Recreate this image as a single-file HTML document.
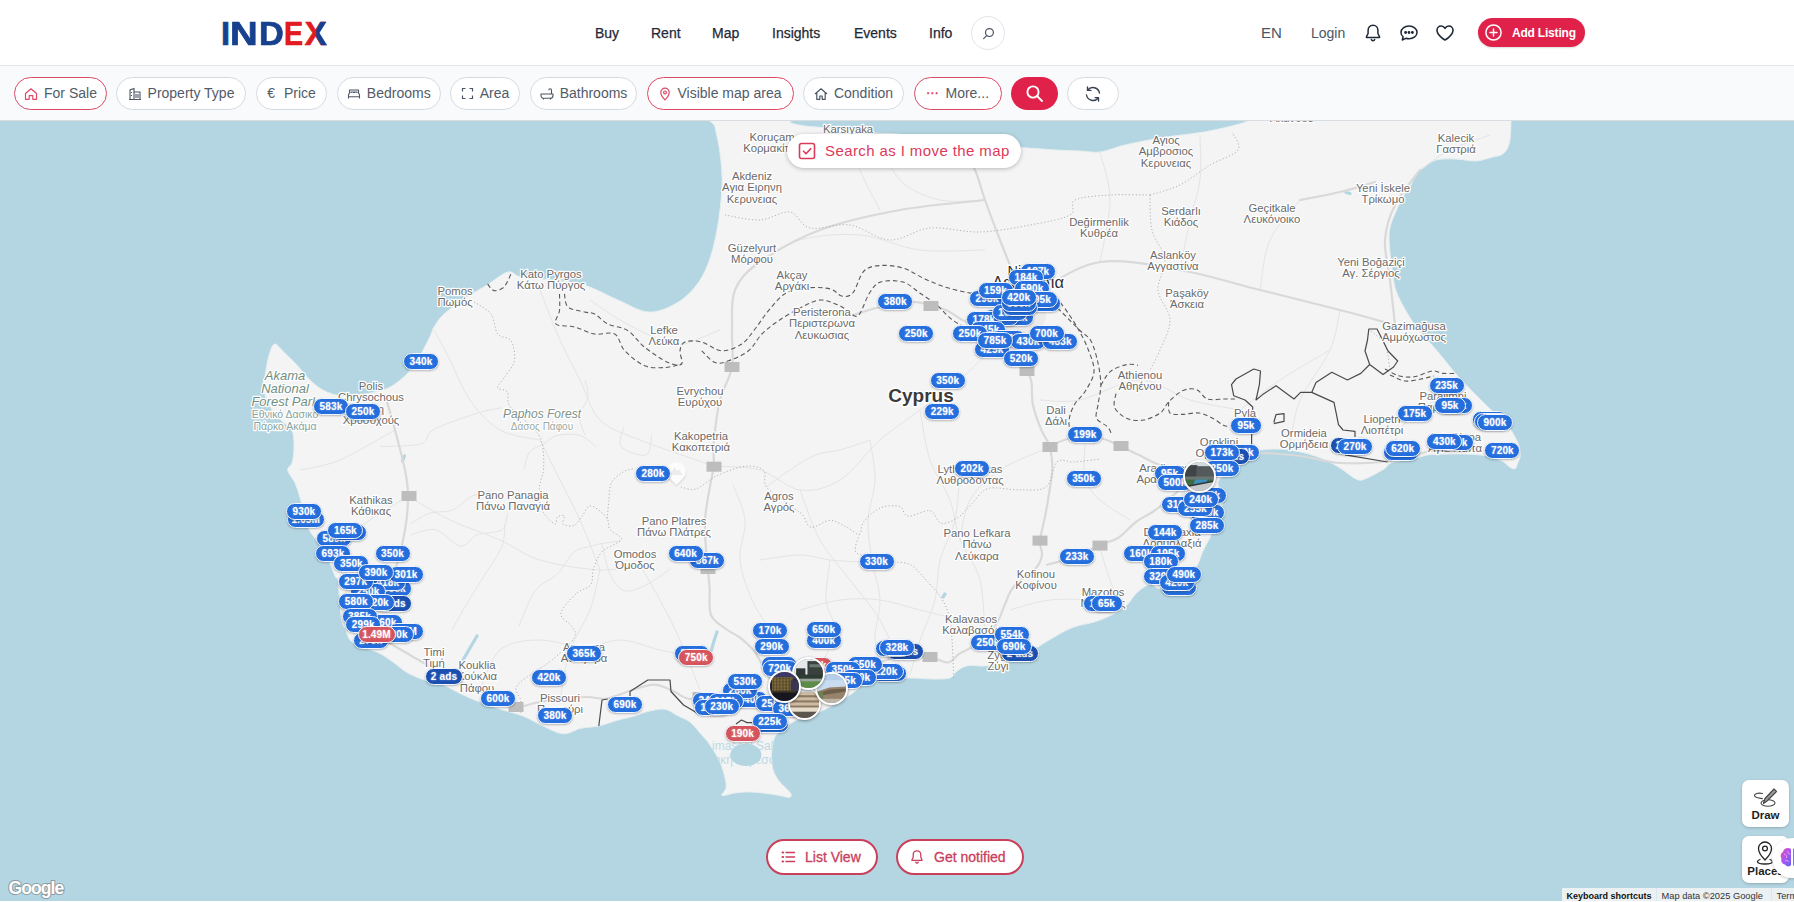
<!DOCTYPE html>
<html lang="en">
<head>
<meta charset="utf-8">
<title>INDEX - Map</title>
<style>
*{box-sizing:border-box;margin:0;padding:0}
html,body{width:1794px;height:902px;overflow:hidden;background:#fff;font-family:"Liberation Sans",sans-serif;color:#1f2937}
#hdr{position:absolute;left:0;top:0;width:1794px;height:66px;background:#fff;border-bottom:1px solid #e3e6ea}
#logo{position:absolute;left:0;top:0;font-size:32.56px;line-height:1;font-weight:bold;color:#17408f}
#logo span{position:absolute;top:17.7px;transform-origin:0 0;display:block;-webkit-text-stroke:0.7px currentColor}
#logo .r{color:#e21b23}
#logo .x{color:#e21b23}
#logo .x::after{content:"X";position:absolute;left:0;top:0;color:#17408f;clip-path:inset(-5px -5px -5px 11.6px)}
.nav{position:absolute;top:24px;font-size:14px;line-height:18px;color:#1f2937;white-space:nowrap;-webkit-text-stroke:0.25px #1f2937}
.nav.lt{color:#4b5563;-webkit-text-stroke:0}
.circ{position:absolute;left:971px;top:16px;width:34px;height:34px;border:1px solid #e2e5e9;border-radius:50%;background:#fff}
.ico{position:absolute}
#add{position:absolute;left:1478px;top:18px;width:107px;height:29px;border-radius:15px;background:#e0224a;color:#fff;font-size:12px;font-weight:bold;line-height:30px;padding-left:34px;letter-spacing:-0.2px;white-space:nowrap;box-shadow:0 1px 2px rgba(0,0,0,.15)}
#fbar{position:absolute;left:0;top:66px;width:1794px;height:55px;background:#f8fafc;border-bottom:1px solid #d9dde1}
.pill{position:absolute;top:10.5px;height:33px;border:1px solid #d6dae0;border-radius:17px;background:#fff;color:#525b69;font-size:14px;line-height:31px;white-space:nowrap;display:flex;align-items:center;justify-content:center;gap:6px;padding-top:1px}
.pill.on{border:1.3px solid #dd4a66}
.pill svg{flex:none}
#sbtn{position:absolute;left:1010.5px;top:10.5px;width:47px;height:33px;border-radius:17px;background:#e0224a}
#map{position:absolute;left:0;top:121px;width:1794px;height:780px;overflow:hidden;background:#b4d6e2}
.mapsvg{position:absolute;left:0;top:0}
.mk{position:absolute;height:17px;border:1px solid #f1f6ff;border-radius:9px;background:#246ddd;color:#fff;font-size:10px;font-weight:bold;line-height:15px;text-align:center;white-space:nowrap;letter-spacing:.15px;box-shadow:0 1px 2px rgba(0,0,0,.25);text-shadow:0 0 2px rgba(255,255,255,.5)}
.mk.rd{background:#d5545c}
.mk.dk{background:#1a4fb0}
.ph{position:absolute;width:33px;height:33px;border-radius:50%;border:2px solid #fff;box-shadow:0 1px 3px rgba(0,0,0,.4);overflow:hidden;background:#888}
.ph svg{display:block;filter:blur(.7px);margin:-1px 0 0 -1px}
#sam{position:absolute;left:787px;top:13px;width:234px;height:34px;border-radius:17px;background:#fff;box-shadow:0 1px 4px rgba(0,0,0,.25);color:#dc3a5a;font-size:15px;line-height:34px;padding-left:38px;white-space:nowrap;letter-spacing:.4px}
.bbtn{position:absolute;top:718px;height:36px;border:2px solid #c9405c;border-radius:18px;background:#fff;color:#c9405c;font-size:14px;line-height:32px;white-space:nowrap;-webkit-text-stroke:0.3px #c9405c}
.tool{position:absolute;left:1742px;width:47px;height:47px;border-radius:7px;background:#fff;box-shadow:0 1px 3px rgba(0,0,0,.2);font-size:11.5px;font-weight:bold;color:#1f1f1f;text-align:center}
.tool span{position:absolute;left:0;right:0;bottom:5px;line-height:13px}
#goog{position:absolute;left:0;top:750px}
#attr{position:absolute;left:1561.5px;top:767px;height:14px;width:240px;background:rgba(245,245,245,.85);font-size:9.3px;line-height:16px;color:#333;white-space:nowrap}
#attr b{position:absolute;left:5px;top:0;font-size:9px;color:#111}
#attr i{font-style:normal;position:absolute;top:0;height:14px;padding-left:5px;border-left:1.5px solid #dbe7ec}
#brain{position:absolute;left:1772px;top:717px;width:40px;height:40px;border-radius:50%;background:#fff;box-shadow:0 1px 3px rgba(0,0,0,.2)}
#foot{position:absolute;left:0;top:901px;width:1794px;height:1px;background:#fff}
</style>
</head>
<body>
<div id="hdr">
  <div id="logo"><span class="" style="left:221.02px;transform:scaleX(1)">I</span><span class="" style="left:230.43px;transform:scaleX(1.178)">N</span><span class="" style="left:258.70px;transform:scaleX(1.054)">D</span><span class="r" style="left:284.08px;transform:scaleX(0.878)">E</span><span class="x" style="left:304.71px;transform:scaleX(1.0)">X</span></div>
  <div class="nav" style="left:595px">Buy</div>
  <div class="nav" style="left:651px">Rent</div>
  <div class="nav" style="left:712px">Map</div>
  <div class="nav" style="left:772px">Insights</div>
  <div class="nav" style="left:854px">Events</div>
  <div class="nav" style="left:929px">Info</div>
  <div class="circ"><svg class="ico" style="left:9px;top:9px" width="15" height="15" viewBox="0 0 16 16" fill="none" stroke="#4b5563" stroke-width="1.3" stroke-linecap="round"><circle cx="9" cy="7" r="4.2"/><path d="M6 10.2 2.8 13.4"/></svg></div>
  <div class="nav lt" style="left:1261px;font-size:15px;-webkit-text-stroke:0">EN</div>
  <div class="nav lt" style="left:1311px">Login</div>
  <svg class="ico" style="left:1364px;top:23px" width="18" height="20" viewBox="0 0 18 20" fill="none" stroke="#1f2937" stroke-width="1.5" stroke-linecap="round" stroke-linejoin="round"><path d="M9 2.2c-3 0-4.9 2.2-4.9 5v3.3L2.5 13.6v.9h13v-.9l-1.6-3.1V7.2c0-2.800-1.900-5-4.900-5z"/><path d="M7.300 16.600a1.800 1.800 0 0 0 3.400 0"/></svg>
  <svg class="ico" style="left:1399px;top:24px" width="20" height="18" viewBox="0 0 20 18" fill="none" stroke="#1f2937" stroke-width="1.5" stroke-linecap="round" stroke-linejoin="round"><path d="M10 2C5.600 2 2 4.800 2 8.400c0 1.700.8 3.200 2.100 4.300L3.300 16l3.500-1.700c1 .3 2.100.5 3.200.5 4.400 0 8-2.800 8-6.400S14.400 2 10 2z"/><circle cx="6.600" cy="8.500" r=".7" fill="#1f2937"/><circle cx="10" cy="8.500" r=".7" fill="#1f2937"/><circle cx="13.400" cy="8.500" r=".7" fill="#1f2937"/></svg>
  <svg class="ico" style="left:1435px;top:24px" width="20" height="18" viewBox="0 0 20 18" fill="none" stroke="#1f2937" stroke-width="1.6" stroke-linejoin="round"><path d="M10 16S2 11.500 2 6.300C2 3.900 3.800 2 6.100 2 7.700 2 9.200 2.900 10 4.300 10.800 2.900 12.300 2 13.900 2 16.200 2 18 3.900 18 6.300 18 11.500 10 16 10 16z"/></svg>
  <div id="add"><svg class="ico" style="left:6px;top:5px" width="19" height="19" viewBox="0 0 19 19" fill="none" stroke="#fff" stroke-width="1.5" stroke-linecap="round"><circle cx="9.500" cy="9.500" r="7.600"/><path d="M9.500 6v7M6 9.500h7"/></svg>Add Listing</div>
</div>
<div id="fbar">
  <div class="pill on" style="left:14px;width:93px"><svg width="14" height="14" viewBox="0 0 14 14" fill="none" stroke="#dd4a66" stroke-width="1.2" stroke-linejoin="round"><path d="M1.500 6.500 7 1.800l5.500 4.700V12.300H8.800V8.600H5.200v3.700H1.500z"/></svg>For Sale</div>
  <div class="pill" style="left:116px;width:130px"><svg width="14" height="14" viewBox="0 0 14 14" fill="none" stroke="#4b5563" stroke-width="1.100"><path d="M2 12.500V3l4-1.500v11M6 5h6v7.500M1 12.500h12M8 7v4M10 7v4M3.500 5v1M3.500 8v1"/></svg>Property Type</div>
  <div class="pill" style="left:256px;width:71px"><span style="font-size:14px;margin-right:3px;-webkit-text-stroke:0">€</span>Price</div>
  <div class="pill" style="left:337px;width:103.500px"><svg width="14" height="14" viewBox="0 0 14 14" fill="none" stroke="#4b5563" stroke-width="1.100" stroke-linejoin="round"><path d="M1.500 11.500V7.800L2.500 6V3h9v3l1 1.800v3.700M1.500 9.800h11M4 6V5h2.500v1M7.500 6V5H10v1"/></svg>Bedrooms</div>
  <div class="pill" style="left:450px;width:70px"><svg width="13" height="13" viewBox="0 0 13 13" fill="none" stroke="#4b5563" stroke-width="1.200"><path d="M1.500 4.500v-3h3M8.500 1.500h3v3M11.500 8.500v3h-3M4.500 11.500h-3v-3"/></svg>Area</div>
  <div class="pill" style="left:530px;width:107px"><svg width="14" height="14" viewBox="0 0 14 14" fill="none" stroke="#4b5563" stroke-width="1.100" stroke-linejoin="round"><path d="M1 7h12v1.500c0 1.700-1.200 2.800-2.800 2.800H3.800C2.200 11.300 1 10.200 1 8.500zM11.500 7V3.300c0-.9-.6-1.500-1.400-1.500S8.800 2.400 8.800 3.300M3.500 11.300v1.200M10.500 11.300v1.200"/></svg>Bathrooms</div>
  <div class="pill on" style="left:647px;width:147px"><svg width="12" height="14" viewBox="0 0 12 14" fill="none" stroke="#dd4a66" stroke-width="1.200"><path d="M6 12.800S1.800 8.600 1.800 5.400a4.200 4.200 0 0 1 8.400 0C10.200 8.600 6 12.800 6 12.800z"/><circle cx="6" cy="5.400" r="1.400"/></svg>Visible map area</div>
  <div class="pill" style="left:803px;width:101px"><svg width="14" height="14" viewBox="0 0 14 14" fill="none" stroke="#4b5563" stroke-width="1.200" stroke-linejoin="round"><path d="M1 7 7 1.800 13 7M2.800 5.800v6.500h3V9h2.400v3.300h3V5.800"/></svg>Condition</div>
  <div class="pill on" style="left:913.500px;width:88.500px"><span style="color:#dd4a66;letter-spacing:1px;font-size:12px;-webkit-text-stroke:0.6px #dd4a66;position:relative;top:-3px">...</span>More...</div>
  <div id="sbtn"><svg class="ico" style="left:14px;top:7px" width="19" height="19" viewBox="0 0 19 19" fill="none" stroke="#fff" stroke-width="1.900" stroke-linecap="round"><circle cx="8" cy="8" r="5.600"/><path d="M12.200 12.200 17 17"/></svg></div>
  <div class="pill" style="left:1067px;width:52px"><svg width="18" height="18" viewBox="0 0 18 18" fill="none" stroke="#374151" stroke-width="1.400" stroke-linecap="round" stroke-linejoin="round"><path d="M15.500 8A6.600 6.600 0 0 0 3.700 5.200M2.500 10a6.600 6.600 0 0 0 11.800 2.800M3.500 2v3.400h3.400M14.500 16v-3.400h-3.400"/></svg></div>
</div>
<div id="map">
<svg width="0" height="0" style="position:absolute"><defs><pattern id="win1" width="3" height="3" patternUnits="userSpaceOnUse"><rect width="3" height="3" fill="none"/><rect x="2" width="1" height="3" fill="#4a3f26"/><rect y="2" width="3" height="1" fill="#5a4c2c"/></pattern></defs></svg>
<svg class="mapsvg" width="1794" height="780" viewBox="0 121 1794 780">
<rect x="0" y="121" width="1794" height="780" fill="#b4d6e2"/>
<path d="M714.0 118.0C726.5 116.5 777.3 117.2 790.0 118.0C802.7 118.8 787.5 121.2 790.0 122.5C792.5 123.8 799.5 125.2 805.0 126.0C810.5 126.8 815.5 126.8 823.0 127.5C830.5 128.2 841.3 129.1 850.0 130.0C858.7 130.9 866.2 132.2 875.0 133.0C883.8 133.8 889.0 133.1 903.0 134.5C917.0 135.9 944.8 139.6 958.7 141.5C972.6 143.4 976.2 144.7 986.6 145.7C997.0 146.7 1009.4 146.9 1021.0 147.6C1032.6 148.3 1046.0 149.4 1056.0 150.0C1066.0 150.6 1073.7 150.7 1081.0 151.0C1088.3 151.3 1092.7 153.0 1100.0 152.0C1107.3 151.0 1114.5 147.4 1125.0 145.0C1135.5 142.6 1150.2 139.7 1162.7 137.6C1175.2 135.5 1189.5 134.3 1200.0 132.6C1210.5 130.9 1217.4 129.4 1225.4 127.5C1233.4 125.6 1243.9 122.9 1248.0 121.0C1252.1 119.1 1206.2 116.8 1250.0 116.0C1293.8 115.2 1467.5 115.2 1511.0 116.0C1554.5 116.8 1511.2 117.0 1511.0 121.0C1510.8 125.0 1510.8 135.2 1510.0 140.0C1509.2 144.8 1508.0 147.5 1506.5 150.0C1505.0 152.5 1503.3 153.8 1501.0 155.0C1498.7 156.2 1496.9 156.0 1492.7 157.0C1488.5 158.0 1482.1 160.7 1476.0 161.0C1469.9 161.3 1462.7 159.2 1456.0 159.0C1449.3 158.8 1441.4 158.6 1436.0 160.0C1430.6 161.4 1426.9 165.2 1423.5 167.7C1420.1 170.2 1417.7 172.1 1415.6 175.0C1413.5 177.9 1412.8 181.8 1411.0 185.0C1409.2 188.2 1407.3 189.2 1404.6 194.0C1401.9 198.8 1397.5 207.6 1395.0 213.6C1392.5 219.6 1390.4 224.5 1389.5 230.0C1388.6 235.5 1389.1 240.2 1389.5 246.7C1389.9 253.1 1390.9 261.4 1392.0 268.7C1393.1 276.0 1393.5 283.4 1396.0 290.7C1398.5 298.0 1403.3 306.3 1407.0 312.7C1410.7 319.1 1413.8 323.6 1418.0 329.0C1422.2 334.4 1427.8 340.2 1432.0 345.0C1436.2 349.8 1439.2 353.4 1443.0 358.0C1446.8 362.6 1449.8 366.8 1454.6 372.3C1459.4 377.8 1466.2 384.9 1472.0 391.0C1477.8 397.1 1483.8 402.9 1489.7 408.6C1495.6 414.3 1502.6 419.3 1507.3 425.0C1512.0 430.7 1515.6 437.7 1517.8 442.6C1520.0 447.5 1520.5 450.8 1520.5 454.3C1520.5 457.8 1518.4 461.2 1517.5 463.6C1516.6 466.0 1516.3 468.2 1515.0 468.8C1513.7 469.4 1511.7 468.2 1509.6 467.0C1507.5 465.8 1505.9 463.0 1502.6 461.3C1499.3 459.6 1494.8 457.8 1489.7 456.6C1484.6 455.4 1478.8 454.7 1472.0 454.3C1465.2 453.9 1456.2 453.9 1448.8 454.0C1441.4 454.1 1433.6 454.2 1427.7 455.0C1421.8 455.8 1419.5 457.8 1413.6 459.0C1407.6 460.2 1396.9 460.8 1392.0 462.5C1387.1 464.2 1388.5 466.2 1384.0 469.0C1379.5 471.8 1369.7 477.3 1365.0 479.0C1360.3 480.7 1360.4 481.0 1356.0 479.0C1351.6 477.0 1344.4 470.5 1338.5 467.0C1332.6 463.5 1327.5 460.6 1320.7 458.0C1314.0 455.4 1305.5 453.0 1298.0 451.5C1290.5 450.0 1283.4 449.0 1276.0 449.0C1268.6 449.0 1259.8 449.7 1253.8 451.5C1247.8 453.3 1244.5 456.7 1240.0 460.0C1235.5 463.3 1230.7 467.7 1227.0 471.5C1223.3 475.3 1218.7 478.6 1218.0 482.7C1217.3 486.8 1222.3 490.1 1222.6 496.0C1222.9 501.9 1221.0 513.7 1220.0 518.0C1219.0 522.3 1218.2 518.7 1216.5 522.0C1214.8 525.3 1212.0 533.1 1209.8 537.9C1207.5 542.7 1205.2 546.2 1203.0 551.0C1200.8 555.8 1199.4 562.1 1196.4 566.9C1193.4 571.7 1190.6 576.3 1185.0 580.0C1179.4 583.7 1168.9 588.2 1163.0 589.0C1157.1 589.8 1154.1 583.9 1149.6 584.7C1145.1 585.5 1139.7 590.2 1136.0 593.6C1132.3 597.0 1131.0 601.4 1127.3 604.8C1123.6 608.1 1119.2 610.9 1114.0 613.7C1108.8 616.5 1102.7 619.3 1096.0 621.5C1089.3 623.7 1080.5 624.6 1073.8 627.0C1067.1 629.4 1062.0 632.7 1056.0 636.0C1050.0 639.3 1043.2 643.7 1038.0 647.0C1032.8 650.3 1029.9 653.4 1024.7 656.0C1019.5 658.6 1013.7 661.1 1007.0 662.8C1000.3 664.5 991.1 665.5 984.6 666.0C978.1 666.5 972.4 664.8 967.8 665.7C963.1 666.6 959.7 669.2 956.7 671.3C953.7 673.3 954.1 676.7 950.0 678.0C945.9 679.3 938.7 679.0 932.0 679.0C925.3 679.0 917.3 677.8 909.9 678.0C902.5 678.2 895.1 679.1 887.6 680.2C880.1 681.3 871.0 682.5 865.0 684.7C859.0 686.9 857.1 690.3 851.9 693.6C846.7 696.9 840.0 701.4 834.0 704.7C828.0 708.0 822.3 711.0 816.0 713.6C809.7 716.2 801.9 717.3 796.0 720.3C790.1 723.3 784.0 728.7 780.5 731.5C777.0 734.3 776.2 733.9 774.8 737.0C773.3 740.1 772.3 745.8 771.8 750.0C771.3 754.2 771.5 758.3 771.8 762.0C772.1 765.7 772.5 768.7 773.8 772.0C775.1 775.3 777.8 779.3 779.8 782.0C781.8 784.7 783.9 786.0 785.8 788.0C787.7 790.0 790.4 792.4 791.0 794.0C791.6 795.6 791.0 797.2 789.5 797.5C788.0 797.8 785.3 796.6 782.0 796.0C778.7 795.4 775.1 794.6 769.8 793.9C764.4 793.2 755.7 792.0 749.9 791.9C744.1 791.8 739.6 792.4 735.0 793.0C730.4 793.6 723.5 796.3 722.0 795.5C720.5 794.7 725.5 790.9 726.0 788.0C726.5 785.1 726.0 782.3 725.0 778.0C724.0 773.7 722.5 767.5 720.0 762.0C717.5 756.5 713.3 749.8 710.0 745.0C706.7 740.2 703.3 736.8 700.0 733.0C696.7 729.2 693.7 724.9 690.0 722.0C686.3 719.1 682.2 718.0 678.0 715.9C673.8 713.8 669.6 709.9 664.6 709.2C659.6 708.5 652.8 710.4 647.8 711.5C642.8 712.6 639.6 714.5 634.4 716.0C629.2 717.5 622.5 718.8 616.6 720.5C610.7 722.2 604.8 724.7 598.8 726.0C592.8 727.3 586.9 727.0 580.9 728.3C574.9 729.6 569.7 734.4 563.0 733.8C556.3 733.2 547.5 727.9 540.8 724.9C534.1 721.9 529.7 718.6 523.0 716.0C516.3 713.4 508.1 711.7 500.7 709.3C493.3 706.9 485.1 704.1 478.4 701.5C471.7 698.9 466.4 696.5 460.5 693.7C454.6 690.9 448.6 687.0 442.7 684.8C436.8 682.6 430.8 682.3 424.9 680.3C418.9 678.2 412.2 675.5 407.0 672.5C401.8 669.5 398.4 665.8 393.6 662.5C388.8 659.2 384.9 655.9 378.0 652.5C371.1 649.1 358.0 647.0 352.4 642.4C346.8 637.8 346.7 631.3 344.6 624.6C342.5 617.9 341.1 609.4 340.0 602.0C338.9 594.6 338.7 584.2 337.9 580.0C337.1 575.8 336.7 579.7 335.4 577.0C334.1 574.3 332.3 568.3 330.3 563.6C328.3 558.9 326.1 552.8 323.6 548.6C321.1 544.4 317.8 542.0 315.3 538.6C312.8 535.2 310.6 533.0 308.6 528.5C306.7 524.0 305.0 516.8 303.6 511.8C302.2 506.8 301.6 503.1 300.2 498.4C298.8 493.7 297.3 488.1 295.2 483.4C293.1 478.7 288.2 473.4 287.7 470.0C287.2 466.6 290.9 466.8 292.0 463.0C293.1 459.2 294.0 452.5 294.0 447.0C294.0 441.5 293.8 434.2 292.0 430.0C290.2 425.8 286.3 425.3 283.0 422.0C279.7 418.7 275.0 414.5 272.0 410.0C269.0 405.5 266.5 399.3 265.0 395.0C263.5 390.7 263.0 387.2 263.0 384.0C263.0 380.8 264.3 379.3 265.0 376.0C265.7 372.7 266.2 368.0 267.0 364.0C267.8 360.0 268.7 355.3 270.0 352.0C271.3 348.7 272.5 343.8 275.0 344.0C277.5 344.2 281.6 349.9 285.2 353.4C288.8 356.9 293.0 360.9 296.9 365.1C300.8 369.3 304.7 374.6 308.6 378.5C312.5 382.4 316.1 385.9 320.3 388.5C324.5 391.1 329.2 393.1 333.7 394.4C338.1 395.6 341.8 396.1 347.0 396.0C352.2 395.9 358.3 395.2 365.0 394.0C371.7 392.8 380.7 391.4 387.2 388.5C393.7 385.6 399.2 381.0 403.9 376.8C408.6 372.6 412.2 368.1 415.6 363.4C419.0 358.7 421.5 353.1 424.0 348.4C426.5 343.7 429.0 338.6 430.7 335.0C432.4 331.4 431.8 330.5 434.0 327.0C436.2 323.5 438.5 319.0 444.0 314.0C449.5 309.0 459.8 301.8 467.0 297.0C474.2 292.2 480.2 289.2 487.0 285.0C493.8 280.8 502.3 273.3 508.0 272.0C513.7 270.7 513.8 275.7 521.0 277.0C528.2 278.3 540.5 278.7 551.0 280.0C561.5 281.3 572.8 281.7 584.0 285.0C595.2 288.3 607.3 295.5 618.0 300.0C628.7 304.5 638.5 311.3 648.0 312.0C657.5 312.7 667.2 308.2 675.0 304.0C682.8 299.8 689.5 293.7 695.0 287.0C700.5 280.3 704.3 273.5 708.0 264.0C711.7 254.5 714.7 242.8 717.0 230.0C719.3 217.2 721.5 199.8 722.0 187.0C722.5 174.2 721.2 163.0 720.0 153.0C718.8 143.0 716.0 132.8 715.0 127.0C714.0 121.2 701.5 119.5 714.0 118.0Z" fill="#f4f4f4" stroke="#e6eef0" stroke-width="1"/>
<defs><clipPath id="landclip"><path d="M714.0 118.0C726.5 116.5 777.3 117.2 790.0 118.0C802.7 118.8 787.5 121.2 790.0 122.5C792.5 123.8 799.5 125.2 805.0 126.0C810.5 126.8 815.5 126.8 823.0 127.5C830.5 128.2 841.3 129.1 850.0 130.0C858.7 130.9 866.2 132.2 875.0 133.0C883.8 133.8 889.0 133.1 903.0 134.5C917.0 135.9 944.8 139.6 958.7 141.5C972.6 143.4 976.2 144.7 986.6 145.7C997.0 146.7 1009.4 146.9 1021.0 147.6C1032.6 148.3 1046.0 149.4 1056.0 150.0C1066.0 150.6 1073.7 150.7 1081.0 151.0C1088.3 151.3 1092.7 153.0 1100.0 152.0C1107.3 151.0 1114.5 147.4 1125.0 145.0C1135.5 142.6 1150.2 139.7 1162.7 137.6C1175.2 135.5 1189.5 134.3 1200.0 132.6C1210.5 130.9 1217.4 129.4 1225.4 127.5C1233.4 125.6 1243.9 122.9 1248.0 121.0C1252.1 119.1 1206.2 116.8 1250.0 116.0C1293.8 115.2 1467.5 115.2 1511.0 116.0C1554.5 116.8 1511.2 117.0 1511.0 121.0C1510.8 125.0 1510.8 135.2 1510.0 140.0C1509.2 144.8 1508.0 147.5 1506.5 150.0C1505.0 152.5 1503.3 153.8 1501.0 155.0C1498.7 156.2 1496.9 156.0 1492.7 157.0C1488.5 158.0 1482.1 160.7 1476.0 161.0C1469.9 161.3 1462.7 159.2 1456.0 159.0C1449.3 158.8 1441.4 158.6 1436.0 160.0C1430.6 161.4 1426.9 165.2 1423.5 167.7C1420.1 170.2 1417.7 172.1 1415.6 175.0C1413.5 177.9 1412.8 181.8 1411.0 185.0C1409.2 188.2 1407.3 189.2 1404.6 194.0C1401.9 198.8 1397.5 207.6 1395.0 213.6C1392.5 219.6 1390.4 224.5 1389.5 230.0C1388.6 235.5 1389.1 240.2 1389.5 246.7C1389.9 253.1 1390.9 261.4 1392.0 268.7C1393.1 276.0 1393.5 283.4 1396.0 290.7C1398.5 298.0 1403.3 306.3 1407.0 312.7C1410.7 319.1 1413.8 323.6 1418.0 329.0C1422.2 334.4 1427.8 340.2 1432.0 345.0C1436.2 349.8 1439.2 353.4 1443.0 358.0C1446.8 362.6 1449.8 366.8 1454.6 372.3C1459.4 377.8 1466.2 384.9 1472.0 391.0C1477.8 397.1 1483.8 402.9 1489.7 408.6C1495.6 414.3 1502.6 419.3 1507.3 425.0C1512.0 430.7 1515.6 437.7 1517.8 442.6C1520.0 447.5 1520.5 450.8 1520.5 454.3C1520.5 457.8 1518.4 461.2 1517.5 463.6C1516.6 466.0 1516.3 468.2 1515.0 468.8C1513.7 469.4 1511.7 468.2 1509.6 467.0C1507.5 465.8 1505.9 463.0 1502.6 461.3C1499.3 459.6 1494.8 457.8 1489.7 456.6C1484.6 455.4 1478.8 454.7 1472.0 454.3C1465.2 453.9 1456.2 453.9 1448.8 454.0C1441.4 454.1 1433.6 454.2 1427.7 455.0C1421.8 455.8 1419.5 457.8 1413.6 459.0C1407.6 460.2 1396.9 460.8 1392.0 462.5C1387.1 464.2 1388.5 466.2 1384.0 469.0C1379.5 471.8 1369.7 477.3 1365.0 479.0C1360.3 480.7 1360.4 481.0 1356.0 479.0C1351.6 477.0 1344.4 470.5 1338.5 467.0C1332.6 463.5 1327.5 460.6 1320.7 458.0C1314.0 455.4 1305.5 453.0 1298.0 451.5C1290.5 450.0 1283.4 449.0 1276.0 449.0C1268.6 449.0 1259.8 449.7 1253.8 451.5C1247.8 453.3 1244.5 456.7 1240.0 460.0C1235.5 463.3 1230.7 467.7 1227.0 471.5C1223.3 475.3 1218.7 478.6 1218.0 482.7C1217.3 486.8 1222.3 490.1 1222.6 496.0C1222.9 501.9 1221.0 513.7 1220.0 518.0C1219.0 522.3 1218.2 518.7 1216.5 522.0C1214.8 525.3 1212.0 533.1 1209.8 537.9C1207.5 542.7 1205.2 546.2 1203.0 551.0C1200.8 555.8 1199.4 562.1 1196.4 566.9C1193.4 571.7 1190.6 576.3 1185.0 580.0C1179.4 583.7 1168.9 588.2 1163.0 589.0C1157.1 589.8 1154.1 583.9 1149.6 584.7C1145.1 585.5 1139.7 590.2 1136.0 593.6C1132.3 597.0 1131.0 601.4 1127.3 604.8C1123.6 608.1 1119.2 610.9 1114.0 613.7C1108.8 616.5 1102.7 619.3 1096.0 621.5C1089.3 623.7 1080.5 624.6 1073.8 627.0C1067.1 629.4 1062.0 632.7 1056.0 636.0C1050.0 639.3 1043.2 643.7 1038.0 647.0C1032.8 650.3 1029.9 653.4 1024.7 656.0C1019.5 658.6 1013.7 661.1 1007.0 662.8C1000.3 664.5 991.1 665.5 984.6 666.0C978.1 666.5 972.4 664.8 967.8 665.7C963.1 666.6 959.7 669.2 956.7 671.3C953.7 673.3 954.1 676.7 950.0 678.0C945.9 679.3 938.7 679.0 932.0 679.0C925.3 679.0 917.3 677.8 909.9 678.0C902.5 678.2 895.1 679.1 887.6 680.2C880.1 681.3 871.0 682.5 865.0 684.7C859.0 686.9 857.1 690.3 851.9 693.6C846.7 696.9 840.0 701.4 834.0 704.7C828.0 708.0 822.3 711.0 816.0 713.6C809.7 716.2 801.9 717.3 796.0 720.3C790.1 723.3 784.0 728.7 780.5 731.5C777.0 734.3 776.2 733.9 774.8 737.0C773.3 740.1 772.3 745.8 771.8 750.0C771.3 754.2 771.5 758.3 771.8 762.0C772.1 765.7 772.5 768.7 773.8 772.0C775.1 775.3 777.8 779.3 779.8 782.0C781.8 784.7 783.9 786.0 785.8 788.0C787.7 790.0 790.4 792.4 791.0 794.0C791.6 795.6 791.0 797.2 789.5 797.5C788.0 797.8 785.3 796.6 782.0 796.0C778.7 795.4 775.1 794.6 769.8 793.9C764.4 793.2 755.7 792.0 749.9 791.9C744.1 791.8 739.6 792.4 735.0 793.0C730.4 793.6 723.5 796.3 722.0 795.5C720.5 794.7 725.5 790.9 726.0 788.0C726.5 785.1 726.0 782.3 725.0 778.0C724.0 773.7 722.5 767.5 720.0 762.0C717.5 756.5 713.3 749.8 710.0 745.0C706.7 740.2 703.3 736.8 700.0 733.0C696.7 729.2 693.7 724.9 690.0 722.0C686.3 719.1 682.2 718.0 678.0 715.9C673.8 713.8 669.6 709.9 664.6 709.2C659.6 708.5 652.8 710.4 647.8 711.5C642.8 712.6 639.6 714.5 634.4 716.0C629.2 717.5 622.5 718.8 616.6 720.5C610.7 722.2 604.8 724.7 598.8 726.0C592.8 727.3 586.9 727.0 580.9 728.3C574.9 729.6 569.7 734.4 563.0 733.8C556.3 733.2 547.5 727.9 540.8 724.9C534.1 721.9 529.7 718.6 523.0 716.0C516.3 713.4 508.1 711.7 500.7 709.3C493.3 706.9 485.1 704.1 478.4 701.5C471.7 698.9 466.4 696.5 460.5 693.7C454.6 690.9 448.6 687.0 442.7 684.8C436.8 682.6 430.8 682.3 424.9 680.3C418.9 678.2 412.2 675.5 407.0 672.5C401.8 669.5 398.4 665.8 393.6 662.5C388.8 659.2 384.9 655.9 378.0 652.5C371.1 649.1 358.0 647.0 352.4 642.4C346.8 637.8 346.7 631.3 344.6 624.6C342.5 617.9 341.1 609.4 340.0 602.0C338.9 594.6 338.7 584.2 337.9 580.0C337.1 575.8 336.7 579.7 335.4 577.0C334.1 574.3 332.3 568.3 330.3 563.6C328.3 558.9 326.1 552.8 323.6 548.6C321.1 544.4 317.8 542.0 315.3 538.6C312.8 535.2 310.6 533.0 308.6 528.5C306.7 524.0 305.0 516.8 303.6 511.8C302.2 506.8 301.6 503.1 300.2 498.4C298.8 493.7 297.3 488.1 295.2 483.4C293.1 478.7 288.2 473.4 287.7 470.0C287.2 466.6 290.9 466.8 292.0 463.0C293.1 459.2 294.0 452.5 294.0 447.0C294.0 441.5 293.8 434.2 292.0 430.0C290.2 425.8 286.3 425.3 283.0 422.0C279.7 418.7 275.0 414.5 272.0 410.0C269.0 405.5 266.5 399.3 265.0 395.0C263.5 390.7 263.0 387.2 263.0 384.0C263.0 380.8 264.3 379.3 265.0 376.0C265.7 372.7 266.2 368.0 267.0 364.0C267.8 360.0 268.7 355.3 270.0 352.0C271.3 348.7 272.5 343.8 275.0 344.0C277.5 344.2 281.6 349.9 285.2 353.4C288.8 356.9 293.0 360.9 296.9 365.1C300.8 369.3 304.7 374.6 308.6 378.5C312.5 382.4 316.1 385.9 320.3 388.5C324.5 391.1 329.2 393.1 333.7 394.4C338.1 395.6 341.8 396.1 347.0 396.0C352.2 395.9 358.3 395.2 365.0 394.0C371.7 392.8 380.7 391.4 387.2 388.5C393.7 385.6 399.2 381.0 403.9 376.8C408.6 372.6 412.2 368.1 415.6 363.4C419.0 358.7 421.5 353.1 424.0 348.4C426.5 343.7 429.0 338.6 430.7 335.0C432.4 331.4 431.8 330.5 434.0 327.0C436.2 323.5 438.5 319.0 444.0 314.0C449.5 309.0 459.8 301.8 467.0 297.0C474.2 292.2 480.2 289.2 487.0 285.0C493.8 280.8 502.3 273.3 508.0 272.0C513.7 270.7 513.8 275.7 521.0 277.0C528.2 278.3 540.5 278.7 551.0 280.0C561.5 281.3 572.8 281.7 584.0 285.0C595.2 288.3 607.3 295.5 618.0 300.0C628.7 304.5 638.5 311.3 648.0 312.0C657.5 312.7 667.2 308.2 675.0 304.0C682.8 299.8 689.5 293.7 695.0 287.0C700.5 280.3 704.3 273.5 708.0 264.0C711.7 254.5 714.7 242.8 717.0 230.0C719.3 217.2 721.5 199.8 722.0 187.0C722.5 174.2 721.2 163.0 720.0 153.0C718.8 143.0 716.0 132.8 715.0 127.0C714.0 121.2 701.5 119.5 714.0 118.0Z"/></clipPath></defs>
<g clip-path="url(#landclip)" font-family="Liberation Sans, sans-serif" font-size="12" fill="#bcd9e4" text-anchor="middle">
<text x="741" y="750.0">Limassol Salt</text>
<text x="741" y="764.0">Αλυκή Λεμεσού</text>
</g>
<ellipse cx="745.9" cy="754.9" rx="15.5" ry="11.2" fill="#b4d6e2"/>
<path d="M945.0 594.0 L943.0 597.0" fill="none" stroke="#b4d6e2" stroke-width="3.2" stroke-linecap="round"/>
<path d="M404.5 456.0 L402.5 461.0" fill="none" stroke="#b4d6e2" stroke-width="3.2" stroke-linecap="round"/>
<path d="M717.0 632.0C716.5 633.5 714.9 638.0 714.0 641.0C713.1 644.0 711.9 648.5 711.5 650.0" fill="none" stroke="#b4d6e2" stroke-width="3.2" stroke-linecap="round"/>
<path d="M477.0 636.0C475.8 638.0 472.3 644.0 470.0 648.0C467.7 652.0 464.2 658.0 463.0 660.0" fill="none" stroke="#b4d6e2" stroke-width="3.2" stroke-linecap="round"/>
<path d="M1350.0 193.5 L1346.0 192.5" fill="none" stroke="#b4d6e2" stroke-width="3.2" stroke-linecap="round"/>
<ellipse cx="1020" cy="315" rx="26" ry="20" fill="#ebebeb"/>
<ellipse cx="808" cy="690" rx="30" ry="12" fill="#ebebeb"/>
<ellipse cx="1195" cy="495" rx="14" ry="22" fill="#ebebeb"/>
<ellipse cx="350" cy="610" rx="10" ry="22" fill="#ebebeb"/>
<path d="M380.0 446.5C386.9 446.1 412.8 446.6 421.6 443.8C430.4 441.1 423.5 435.1 432.7 430.0C441.9 424.9 465.4 417.0 477.0 413.3C488.6 409.6 497.8 408.6 502.0 407.7" fill="none" stroke="#e4e4e4" stroke-width="1"/>
<path d="M410.5 524.0C413.8 522.2 423.1 515.3 430.0 513.0C436.9 510.7 445.1 513.1 452.0 510.3C458.9 507.5 465.0 499.6 471.5 496.4C478.0 493.2 487.8 491.9 491.0 491.0" fill="none" stroke="#e4e4e4" stroke-width="1"/>
<path d="M410.5 535.0C414.6 534.1 427.1 527.9 435.4 529.7C443.7 531.5 453.5 545.1 460.4 546.0C467.3 546.9 470.1 537.7 477.0 535.0C483.9 532.3 496.9 533.4 502.0 529.7C507.1 526.0 506.6 515.8 507.5 513.0" fill="none" stroke="#e4e4e4" stroke-width="1"/>
<path d="M524.0 468.7C525.0 465.9 526.4 456.1 529.7 452.0C533.0 447.9 539.0 446.6 543.6 443.8C548.2 441.0 551.4 436.8 557.4 435.4C563.4 434.0 573.2 433.5 579.6 435.4C586.0 437.2 593.3 444.6 596.0 446.5" fill="none" stroke="#e4e4e4" stroke-width="1"/>
<path d="M585.0 380.0C585.5 382.8 588.9 390.6 588.0 396.6C587.1 402.6 580.1 409.5 579.6 416.0C579.1 422.5 584.1 432.2 585.0 435.4" fill="none" stroke="#e4e4e4" stroke-width="1"/>
<path d="M624.0 427.0C623.5 430.2 617.3 441.8 621.0 446.5C624.7 451.2 640.9 456.9 646.0 455.0C651.1 453.1 650.8 438.7 651.7 435.4" fill="none" stroke="#e4e4e4" stroke-width="1"/>
<path d="M518.6 626.7C521.4 620.7 528.8 599.5 535.3 590.7C541.8 581.9 550.9 580.5 557.4 574.0C563.9 567.5 568.5 556.6 574.0 552.0C579.5 547.4 586.1 547.7 590.7 546.3C595.3 544.9 596.7 544.5 601.8 543.6C606.9 542.7 618.0 541.3 621.2 540.8" fill="none" stroke="#e4e4e4" stroke-width="1"/>
<path d="M452.0 629.5C455.2 623.9 465.9 605.2 471.5 596.0C477.1 586.8 480.3 582.3 485.4 574.0C490.5 565.7 498.8 554.6 502.0 546.3C505.2 538.0 504.3 527.7 504.8 524.0" fill="none" stroke="#e4e4e4" stroke-width="1"/>
<path d="M601.8 543.6C603.2 548.7 606.3 566.1 610.0 574.0C613.7 581.9 618.0 588.9 624.0 590.7C630.0 592.5 638.2 588.7 646.0 585.0C653.8 581.3 666.8 571.2 671.0 568.5" fill="none" stroke="#e4e4e4" stroke-width="1"/>
<path d="M733.0 485.0C735.0 490.8 743.8 507.5 745.0 520.0C746.2 532.5 738.8 546.7 740.0 560.0C741.2 573.3 747.0 588.3 752.0 600.0C757.0 611.7 767.0 625.0 770.0 630.0" fill="none" stroke="#e4e4e4" stroke-width="1"/>
<path d="M766.0 487.0C770.0 484.2 781.8 475.3 790.0 470.0C798.2 464.7 806.7 458.3 815.0 455.0C823.3 451.7 830.8 452.5 840.0 450.0C849.2 447.5 865.0 441.7 870.0 440.0" fill="none" stroke="#e4e4e4" stroke-width="1"/>
<path d="M830.0 560.0C829.3 566.7 825.2 588.3 826.0 600.0C826.8 611.7 835.3 620.0 835.0 630.0C834.7 640.0 825.8 655.0 824.0 660.0" fill="none" stroke="#e4e4e4" stroke-width="1"/>
<path d="M870.0 440.0C870.8 446.7 875.3 466.7 875.0 480.0C874.7 493.3 868.5 506.7 868.0 520.0C867.5 533.3 870.0 546.7 872.0 560.0C874.0 573.3 879.5 586.7 880.0 600.0C880.5 613.3 874.0 628.3 875.0 640.0C876.0 651.7 884.2 665.0 886.0 670.0" fill="none" stroke="#e4e4e4" stroke-width="1"/>
<path d="M960.0 470.0C959.2 478.3 958.3 505.0 955.0 520.0C951.7 535.0 943.3 546.7 940.0 560.0C936.7 573.3 938.3 586.7 935.0 600.0C931.7 613.3 924.2 627.5 920.0 640.0C915.8 652.5 911.7 669.2 910.0 675.0" fill="none" stroke="#e4e4e4" stroke-width="1"/>
<path d="M800.0 610.0C806.7 608.3 826.7 601.7 840.0 600.0C853.3 598.3 866.7 598.3 880.0 600.0C893.3 601.7 906.7 606.7 920.0 610.0C933.3 613.3 953.3 618.3 960.0 620.0" fill="none" stroke="#e4e4e4" stroke-width="1"/>
<path d="M760.0 560.0C766.7 559.2 788.3 555.0 800.0 555.0C811.7 555.0 819.7 558.8 830.0 560.0C840.3 561.2 856.7 561.7 862.0 562.0" fill="none" stroke="#e4e4e4" stroke-width="1"/>
<path d="M434.0 330.0C436.7 335.0 444.0 348.3 450.0 360.0C456.0 371.7 461.7 388.3 470.0 400.0C478.3 411.7 488.3 423.3 500.0 430.0C511.7 436.7 533.3 438.3 540.0 440.0" fill="none" stroke="#e4e4e4" stroke-width="1"/>
<path d="M408.0 496.0C415.0 500.0 434.7 512.7 450.0 520.0C465.3 527.3 485.0 533.3 500.0 540.0C515.0 546.7 523.3 555.0 540.0 560.0C556.7 565.0 583.3 569.2 600.0 570.0C616.7 570.8 633.3 565.8 640.0 565.0" fill="none" stroke="#e4e4e4" stroke-width="1"/>
<path d="M540.0 440.0C543.3 446.7 553.3 466.7 560.0 480.0C566.7 493.3 573.3 505.0 580.0 520.0C586.7 535.0 596.7 561.7 600.0 570.0" fill="none" stroke="#e4e4e4" stroke-width="1"/>
<path d="M600.0 570.0C598.3 576.7 595.0 596.7 590.0 610.0C585.0 623.3 575.0 635.0 570.0 650.0C565.0 665.0 561.7 691.7 560.0 700.0" fill="none" stroke="#e4e4e4" stroke-width="1"/>
<path d="M640.0 565.0C643.3 570.8 653.3 587.5 660.0 600.0C666.7 612.5 673.3 625.0 680.0 640.0C686.7 655.0 696.7 681.7 700.0 690.0" fill="none" stroke="#e4e4e4" stroke-width="1"/>
<path d="M714.0 466.0C721.7 466.7 745.7 466.0 760.0 470.0C774.3 474.0 786.7 488.3 800.0 490.0C813.3 491.7 826.7 488.3 840.0 480.0C853.3 471.7 866.7 451.7 880.0 440.0C893.3 428.3 906.7 420.0 920.0 410.0C933.3 400.0 946.7 391.7 960.0 380.0C973.3 368.3 993.3 346.7 1000.0 340.0" fill="none" stroke="#e4e4e4" stroke-width="1"/>
<path d="M800.0 490.0C803.3 498.3 811.7 525.0 820.0 540.0C828.3 555.0 840.0 566.7 850.0 580.0C860.0 593.3 871.7 605.8 880.0 620.0C888.3 634.2 896.7 657.5 900.0 665.0" fill="none" stroke="#e4e4e4" stroke-width="1"/>
<path d="M920.0 410.0C921.7 418.3 925.0 445.0 930.0 460.0C935.0 475.0 945.0 486.7 950.0 500.0C955.0 513.3 955.0 526.7 960.0 540.0C965.0 553.3 975.8 563.3 980.0 580.0C984.2 596.7 984.2 630.0 985.0 640.0" fill="none" stroke="#e4e4e4" stroke-width="1"/>
<path d="M1050.0 447.0C1041.7 450.8 1013.3 461.2 1000.0 470.0C986.7 478.8 976.7 488.3 970.0 500.0C963.3 511.7 961.7 533.3 960.0 540.0" fill="none" stroke="#e4e4e4" stroke-width="1"/>
<path d="M760.0 262.0C766.7 258.3 783.3 244.5 800.0 240.0C816.7 235.5 840.0 233.3 860.0 235.0C880.0 236.7 899.2 247.5 920.0 250.0C940.8 252.5 974.2 250.0 985.0 250.0" fill="none" stroke="#e4e4e4" stroke-width="1"/>
<path d="M850.0 130.0C851.7 136.7 855.0 156.7 860.0 170.0C865.0 183.3 876.7 203.3 880.0 210.0" fill="none" stroke="#e4e4e4" stroke-width="1"/>
<path d="M1100.0 152.0C1101.7 160.0 1110.0 181.7 1110.0 200.0C1110.0 218.3 1101.7 251.7 1100.0 262.0" fill="none" stroke="#e4e4e4" stroke-width="1"/>
<path d="M1180.0 270.0C1181.7 261.7 1186.7 235.0 1190.0 220.0C1193.3 205.0 1198.3 194.2 1200.0 180.0C1201.7 165.8 1200.0 142.5 1200.0 135.0" fill="none" stroke="#e4e4e4" stroke-width="1"/>
<path d="M1260.0 290.0C1261.7 281.7 1263.3 255.0 1270.0 240.0C1276.7 225.0 1295.0 206.7 1300.0 200.0" fill="none" stroke="#e4e4e4" stroke-width="1"/>
<path d="M1340.0 310.0C1338.3 316.7 1336.7 335.0 1330.0 350.0C1323.3 365.0 1306.7 384.2 1300.0 400.0C1293.3 415.8 1291.7 437.5 1290.0 445.0" fill="none" stroke="#e4e4e4" stroke-width="1"/>
<path d="M1099.0 545.0C1100.8 550.8 1106.5 570.0 1110.0 580.0C1113.5 590.0 1118.3 600.8 1120.0 605.0" fill="none" stroke="#e4e4e4" stroke-width="1"/>
<path d="M1130.0 520.0C1125.0 516.7 1107.5 507.0 1100.0 500.0C1092.5 493.0 1087.5 487.2 1085.0 478.0C1082.5 468.8 1085.0 450.5 1085.0 445.0" fill="none" stroke="#e4e4e4" stroke-width="1"/>
<path d="M1390.0 460.0C1391.7 455.0 1395.0 438.3 1400.0 430.0C1405.0 421.7 1412.5 415.8 1420.0 410.0C1427.5 404.2 1440.8 397.5 1445.0 395.0" fill="none" stroke="#e4e4e4" stroke-width="1"/>
<path d="M480.0 690.0C483.3 683.3 490.0 658.3 500.0 650.0C510.0 641.7 525.8 640.0 540.0 640.0C554.2 640.0 577.5 648.3 585.0 650.0" fill="none" stroke="#e4e4e4" stroke-width="1"/>
<path d="M585.0 650.0C590.8 648.3 607.5 640.0 620.0 640.0C632.5 640.0 647.3 647.2 660.0 650.0C672.7 652.8 690.0 655.8 696.0 657.0" fill="none" stroke="#e4e4e4" stroke-width="1"/>
<path d="M340.0 540.0C345.0 536.7 358.7 527.3 370.0 520.0C381.3 512.7 401.7 500.0 408.0 496.0" fill="none" stroke="#e4e4e4" stroke-width="1"/>
<path d="M300.0 470.0C306.7 468.3 324.2 466.7 340.0 460.0C355.8 453.3 385.8 435.0 395.0 430.0" fill="none" stroke="#e4e4e4" stroke-width="1"/>
<path d="M720.0 330.0C713.3 332.5 690.0 343.3 680.0 345.0C670.0 346.7 670.0 344.2 660.0 340.0C650.0 335.8 631.7 326.7 620.0 320.0C608.3 313.3 595.0 303.3 590.0 300.0" fill="none" stroke="#e4e4e4" stroke-width="1"/>
<path d="M540.0 290.0C543.3 298.3 553.3 325.0 560.0 340.0C566.7 355.0 573.3 366.7 580.0 380.0C586.7 393.3 590.0 410.0 600.0 420.0C610.0 430.0 621.0 432.3 640.0 440.0C659.0 447.7 701.7 461.7 714.0 466.0" fill="none" stroke="#e4e4e4" stroke-width="1"/>
<path d="M875.0 133.0C879.2 140.8 889.2 168.8 900.0 180.0C910.8 191.2 925.8 196.7 940.0 200.0C954.2 203.3 977.5 200.0 985.0 200.0" fill="none" stroke="#e4e4e4" stroke-width="1"/>
<path d="M1040.0 400.0C1046.7 400.0 1063.3 403.3 1080.0 400.0C1096.7 396.7 1121.7 380.0 1140.0 380.0C1158.3 380.0 1173.3 395.0 1190.0 400.0C1206.7 405.0 1231.7 408.3 1240.0 410.0" fill="none" stroke="#e4e4e4" stroke-width="1"/>
<path d="M1240.0 410.0C1246.7 405.0 1265.0 390.0 1280.0 380.0C1295.0 370.0 1321.7 355.0 1330.0 350.0" fill="none" stroke="#e4e4e4" stroke-width="1"/>
<path d="M1420.0 170.0C1425.0 166.7 1438.3 155.8 1450.0 150.0C1461.7 144.2 1483.3 137.5 1490.0 135.0" fill="none" stroke="#e4e4e4" stroke-width="1"/>
<path d="M1010.0 610.0C1016.7 608.3 1034.5 601.7 1050.0 600.0C1065.5 598.3 1094.2 600.0 1103.0 600.0" fill="none" stroke="#e4e4e4" stroke-width="1"/>
<path d="M1022.0 340.0C1022.9 344.8 1025.7 361.6 1027.3 368.7C1028.9 375.8 1030.6 376.5 1031.5 382.5C1032.4 388.5 1031.3 396.8 1032.9 404.7C1034.5 412.6 1038.4 422.7 1041.2 429.6C1044.0 436.5 1047.7 439.5 1049.5 446.0C1051.3 452.5 1052.3 461.0 1052.3 468.4C1052.3 475.8 1050.7 482.8 1049.5 490.6C1048.3 498.5 1046.9 507.1 1045.3 515.5C1043.7 523.9 1040.5 534.2 1040.0 540.8C1039.5 547.4 1042.7 550.5 1042.0 555.0C1041.3 559.5 1040.7 562.7 1036.0 568.0C1031.3 573.3 1018.8 580.9 1013.6 587.0C1008.4 593.1 1007.7 598.5 1004.7 604.8C1001.7 611.1 1000.7 618.2 995.7 624.9C990.8 631.6 981.1 640.1 975.0 645.0C968.9 649.9 963.5 651.1 959.0 654.0C954.5 656.9 952.8 662.0 948.0 662.5C943.2 663.0 937.0 658.1 930.0 657.0C923.0 655.9 914.3 654.8 906.0 655.6C897.7 656.4 889.3 659.3 880.0 662.0C870.7 664.7 860.0 668.2 850.0 672.0C840.0 675.8 830.0 681.2 820.0 685.0C810.0 688.8 800.0 692.7 790.0 695.0C780.0 697.3 770.0 698.2 760.0 699.0C750.0 699.8 740.0 700.3 730.0 700.0C720.0 699.7 705.0 697.5 700.0 697.0" fill="none" stroke="#d9d9d9" stroke-width="2.2" stroke-linecap="round"/>
<path d="M700.0 697.0C697.9 697.2 692.3 699.7 687.5 698.5C682.7 697.3 676.6 692.3 671.0 690.0C665.4 687.7 660.5 684.7 654.0 684.7C647.5 684.7 639.8 687.7 632.0 690.0C624.2 692.3 614.4 697.3 607.0 698.5C599.6 699.7 595.5 697.0 587.7 697.0C579.9 697.0 568.8 697.5 560.0 698.5C551.2 699.5 542.3 701.6 535.0 703.0C527.7 704.4 522.7 707.8 516.0 707.0C509.3 706.2 502.7 701.5 495.0 698.0C487.3 694.5 479.2 690.3 470.0 686.0C460.8 681.7 450.0 677.2 440.0 672.0C430.0 666.8 419.2 660.3 410.0 655.0C400.8 649.7 391.7 644.5 385.0 640.0C378.3 635.5 372.5 630.0 370.0 628.0" fill="none" stroke="#d9d9d9" stroke-width="2.2" stroke-linecap="round"/>
<path d="M1047.0 564.7C1050.0 563.9 1059.0 561.9 1064.9 560.0C1070.9 558.1 1076.8 556.1 1082.7 553.5C1088.6 550.9 1094.6 547.2 1100.5 544.6C1106.4 542.0 1112.1 541.8 1118.0 538.0C1123.9 534.2 1130.0 526.5 1136.0 522.0C1142.0 517.5 1148.3 515.0 1154.0 511.0C1159.7 507.0 1164.8 502.3 1170.0 498.0C1175.2 493.7 1182.5 487.2 1185.0 485.0" fill="none" stroke="#d9d9d9" stroke-width="2.2" stroke-linecap="round"/>
<path d="M1049.5 446.0C1053.2 444.7 1063.4 439.3 1071.7 438.0C1080.0 436.7 1091.4 436.7 1099.4 438.0C1107.5 439.3 1113.6 443.2 1120.0 446.0C1126.4 448.8 1132.2 451.8 1138.0 454.6C1143.8 457.4 1148.6 460.3 1154.8 462.9C1161.0 465.5 1168.3 469.1 1175.0 470.0C1181.7 470.9 1191.7 468.3 1195.0 468.0" fill="none" stroke="#d9d9d9" stroke-width="2.2" stroke-linecap="round"/>
<path d="M1195.0 468.0C1198.3 467.0 1205.8 464.5 1215.0 462.0C1224.2 459.5 1235.8 454.0 1250.0 453.0C1264.2 452.0 1285.0 454.3 1300.0 456.0C1315.0 457.7 1325.0 462.2 1340.0 463.0C1355.0 463.8 1375.0 463.0 1390.0 461.0C1405.0 459.0 1417.5 454.2 1430.0 451.0C1442.5 447.8 1459.2 443.5 1465.0 442.0" fill="none" stroke="#d9d9d9" stroke-width="2.2" stroke-linecap="round"/>
<path d="M850.0 316.0C854.6 314.6 867.5 310.0 877.7 307.7C887.9 305.4 902.3 302.4 911.0 302.0C919.7 301.6 924.0 303.6 930.0 305.0C936.0 306.4 941.0 307.7 947.0 310.5C953.0 313.3 958.8 319.2 966.0 321.6C973.2 324.0 986.0 324.4 990.0 325.0" fill="none" stroke="#d9d9d9" stroke-width="2.2" stroke-linecap="round"/>
<path d="M1020.0 290.0C1016.7 281.7 1005.8 255.0 1000.0 240.0C994.2 225.0 989.2 211.7 985.0 200.0C980.8 188.3 979.2 179.2 975.0 170.0C970.8 160.8 962.5 149.2 960.0 145.0" fill="none" stroke="#d9d9d9" stroke-width="2.2" stroke-linecap="round"/>
<path d="M1040.0 290.0C1050.0 285.3 1076.7 265.3 1100.0 262.0C1123.3 258.7 1153.3 265.3 1180.0 270.0C1206.7 274.7 1233.3 283.3 1260.0 290.0C1286.7 296.7 1317.5 304.2 1340.0 310.0C1362.5 315.8 1385.8 322.5 1395.0 325.0" fill="none" stroke="#d9d9d9" stroke-width="2.2" stroke-linecap="round"/>
<path d="M1395.0 325.0C1394.2 317.5 1391.7 294.2 1390.0 280.0C1388.3 265.8 1384.2 252.5 1385.0 240.0C1385.8 227.5 1389.2 216.7 1395.0 205.0C1400.8 193.3 1415.8 175.8 1420.0 170.0" fill="none" stroke="#d9d9d9" stroke-width="2.2" stroke-linecap="round"/>
<path d="M1300.0 200.0C1306.7 198.7 1327.5 195.0 1340.0 192.0C1352.5 189.0 1369.2 183.7 1375.0 182.0" fill="none" stroke="#d9d9d9" stroke-width="2.2" stroke-linecap="round"/>
<path d="M985.0 200.0C970.8 201.7 927.5 205.0 900.0 210.0C872.5 215.0 843.3 221.3 820.0 230.0C796.7 238.7 774.2 252.0 760.0 262.0C745.8 272.0 739.7 278.7 735.0 290.0C730.3 301.3 732.5 317.2 732.0 330.0C731.5 342.8 734.0 355.3 732.0 367.0C730.0 378.7 723.0 387.8 720.0 400.0C717.0 412.2 715.0 429.0 714.0 440.0C713.0 451.0 714.0 461.7 714.0 466.0" fill="none" stroke="#d9d9d9" stroke-width="2.2" stroke-linecap="round"/>
<path d="M385.0 395.0C386.7 400.8 391.7 417.5 395.0 430.0C398.3 442.5 402.8 459.0 405.0 470.0C407.2 481.0 408.0 486.0 408.0 496.0C408.0 506.0 407.2 517.7 405.0 530.0C402.8 542.3 399.2 558.3 395.0 570.0C390.8 581.7 382.5 595.0 380.0 600.0" fill="none" stroke="#d9d9d9" stroke-width="2.2" stroke-linecap="round"/>
<path d="M714.0 466.0C712.5 475.0 706.0 502.7 705.0 520.0C704.0 537.3 707.2 558.4 708.0 569.7C708.8 581.0 709.1 580.2 709.6 587.7C710.1 595.2 708.3 608.1 711.0 615.0C713.7 621.9 721.2 625.2 726.0 629.0C730.8 632.8 735.3 633.9 740.0 637.6C744.7 641.3 749.8 645.6 754.0 651.0C758.2 656.4 761.5 663.5 765.0 670.0C768.5 676.5 773.3 686.7 775.0 690.0" fill="none" stroke="#d9d9d9" stroke-width="2.2" stroke-linecap="round"/>
<path d="M474.0 302.0C476.8 304.0 487.1 308.7 491.0 314.0C494.9 319.3 494.4 329.6 497.7 334.0C501.0 338.4 508.2 336.2 511.0 340.7C513.8 345.2 515.5 354.7 514.4 360.8C513.3 366.9 507.1 373.0 504.3 377.5C501.5 382.0 497.2 385.2 497.7 387.6C498.2 390.0 505.6 389.1 507.5 392.0C509.4 394.9 506.6 400.7 509.0 405.0C511.4 409.3 517.6 413.8 522.0 418.0C526.4 422.2 531.9 425.7 535.3 430.0C538.7 434.3 540.8 437.4 542.2 443.8C543.6 450.2 544.1 461.3 543.6 468.7C543.1 476.1 539.6 481.1 539.4 488.0C539.2 494.9 539.7 504.3 542.2 510.3C544.8 516.3 552.2 522.9 554.7 524.0C557.2 525.1 555.8 518.4 557.4 517.0C559.0 515.6 563.5 514.6 564.4 515.8C565.3 517.0 561.4 522.4 563.0 524.0C564.6 525.6 570.8 526.9 574.0 525.5C577.2 524.1 579.9 519.0 582.4 515.8C584.9 512.5 586.5 506.9 589.3 506.0C592.1 505.1 596.0 508.2 599.0 510.3C602.0 512.4 605.5 515.4 607.3 518.6C609.1 521.8 607.7 526.5 610.0 529.7C612.3 532.9 620.2 535.7 621.2 538.0C622.2 540.3 618.9 541.3 615.7 543.6C612.5 545.9 605.5 547.8 601.8 551.9C598.1 556.0 595.4 563.0 593.5 568.5C591.6 574.0 593.5 580.9 590.7 585.0C587.9 589.1 581.5 588.7 576.5 593.4C571.5 598.1 561.6 607.8 560.9 613.4C560.1 619.0 569.8 622.7 572.0 626.8C574.2 630.9 577.5 632.5 574.2 638.0C570.9 643.5 559.0 654.1 552.0 660.0C545.0 665.9 537.9 669.1 531.9 673.6C525.9 678.1 518.2 682.5 516.3 687.0C514.4 691.5 520.0 695.9 520.7 700.4C521.4 704.9 520.7 711.6 520.7 713.8" fill="none" stroke="#a9a9a9" stroke-width="0.9" stroke-dasharray="1.2 2.2"/>
<path d="M607.3 518.6C607.5 515.8 608.0 508.0 608.7 502.0C609.4 496.0 609.0 487.7 611.5 482.6C614.0 477.5 620.3 473.8 624.0 471.5C627.7 469.2 632.1 469.2 633.7 468.7" fill="none" stroke="#a9a9a9" stroke-width="0.9" stroke-dasharray="1.2 2.2"/>
<path d="M680.8 487.0C682.7 487.4 688.8 489.5 692.0 489.5C695.2 489.5 695.9 489.4 700.0 487.1C704.1 484.9 709.2 479.5 716.6 476.0C724.0 472.5 736.5 467.2 744.4 466.3C752.3 465.4 760.1 467.1 763.8 470.5C767.5 473.9 761.9 481.0 766.5 487.0C771.1 493.0 785.5 501.9 791.5 506.5C797.5 511.1 799.4 511.4 802.6 514.9C805.9 518.4 806.4 526.4 811.0 527.3C815.6 528.2 824.3 520.4 830.3 520.4C836.3 520.4 842.1 525.0 847.0 527.3C851.9 529.6 856.6 535.2 859.4 534.3C862.2 533.4 860.1 526.2 863.6 521.8C867.1 517.4 874.2 510.6 880.2 508.0C886.2 505.4 895.0 505.1 899.6 506.5C904.2 507.9 902.9 515.5 908.0 516.2C913.1 516.9 924.5 509.5 930.0 510.7C935.5 511.9 936.6 522.1 941.2 523.2C945.8 524.4 952.7 520.8 957.8 517.6C962.9 514.4 966.6 508.7 971.7 503.8C976.8 498.9 980.6 490.8 988.3 488.5C996.0 486.2 1008.4 490.1 1018.0 489.8C1027.6 489.6 1039.5 491.6 1046.0 487.0C1052.5 482.4 1052.4 466.2 1057.0 462.0C1061.6 457.8 1066.6 462.5 1073.8 462.0C1081.0 461.5 1095.6 459.5 1100.0 459.0" fill="none" stroke="#a9a9a9" stroke-width="0.9" stroke-dasharray="1.2 2.2"/>
<path d="M859.4 534.3C858.7 537.1 854.1 547.3 855.3 551.0C856.4 554.7 864.5 555.5 866.3 556.4" fill="none" stroke="#a9a9a9" stroke-width="0.9" stroke-dasharray="1.2 2.2"/>
<path d="M894.0 562.0C896.8 562.5 905.2 561.6 910.7 564.8C916.2 568.0 922.2 575.9 927.3 581.4C932.4 586.9 937.5 592.0 941.2 598.0C944.9 604.0 947.6 609.6 949.5 617.4C951.4 625.2 951.6 634.8 952.3 645.0C953.0 655.2 953.5 672.8 953.7 678.4" fill="none" stroke="#a9a9a9" stroke-width="0.9" stroke-dasharray="1.2 2.2"/>
<path d="M725.0 215.0C730.8 215.8 749.2 220.5 760.0 220.0C770.8 219.5 781.7 210.7 790.0 212.0C798.3 213.3 800.0 225.8 810.0 228.0C820.0 230.2 836.7 223.0 850.0 225.0C863.3 227.0 876.7 239.5 890.0 240.0C903.3 240.5 915.0 229.3 930.0 228.0C945.0 226.7 963.3 232.5 980.0 232.0C996.7 231.5 1015.0 227.8 1030.0 225.0C1045.0 222.2 1062.5 219.2 1070.0 215.0C1077.5 210.8 1068.3 203.3 1075.0 200.0C1081.7 196.7 1097.5 195.8 1110.0 195.0C1122.5 194.2 1143.3 195.0 1150.0 195.0" fill="none" stroke="#a9a9a9" stroke-width="0.9" stroke-dasharray="1.2 2.2"/>
<path d="M1150.0 195.0C1155.0 193.3 1170.0 190.0 1180.0 185.0C1190.0 180.0 1200.3 170.8 1210.0 165.0C1219.7 159.2 1234.3 155.5 1238.0 150.0C1241.7 144.5 1233.0 135.0 1232.0 132.0" fill="none" stroke="#a9a9a9" stroke-width="0.9" stroke-dasharray="1.2 2.2"/>
<path d="M1150.0 195.0C1150.3 200.8 1149.5 219.2 1152.0 230.0C1154.5 240.8 1164.0 250.0 1165.0 260.0C1166.0 270.0 1157.2 280.0 1158.0 290.0C1158.8 300.0 1169.7 310.0 1170.0 320.0C1170.3 330.0 1163.3 341.7 1160.0 350.0C1156.7 358.3 1151.7 366.7 1150.0 370.0" fill="none" stroke="#a9a9a9" stroke-width="0.9" stroke-dasharray="1.2 2.2"/>
<path d="M1390.0 370.0C1389.2 365.8 1388.3 351.7 1385.0 345.0C1381.7 338.3 1372.5 332.5 1370.0 330.0" fill="none" stroke="#a9a9a9" stroke-width="0.9" stroke-dasharray="1.2 2.2"/>
<path d="M487.6 284.0C488.7 285.1 491.3 290.1 494.0 290.6C496.7 291.1 501.2 289.8 504.0 287.0C506.8 284.2 509.8 276.2 511.0 274.0" fill="none" stroke="#5a5a5a" stroke-width="1.1" stroke-dasharray="4.5 3"/>
<path d="M564.5 294.0C565.1 296.2 564.6 304.0 568.0 307.0C571.4 310.0 580.2 310.8 584.6 312.0C589.0 313.2 590.7 312.0 594.6 314.0C598.5 316.0 602.4 321.2 608.0 324.0C613.6 326.8 621.9 326.8 628.0 330.7C634.1 334.6 638.1 342.1 644.8 347.4C651.5 352.7 661.9 359.7 668.0 362.5C674.1 365.3 679.6 365.9 681.6 364.0C683.6 362.1 679.4 354.5 680.0 350.8C680.6 347.1 681.4 343.5 685.0 342.0C688.6 340.5 695.6 340.5 701.7 342.0C707.8 343.5 715.0 350.5 721.7 350.8C728.4 351.1 736.2 347.6 741.8 344.0C747.3 340.4 750.5 334.6 755.0 329.0C759.5 323.4 763.4 316.6 768.6 310.6C773.8 304.6 779.4 296.8 786.0 293.0C792.6 289.2 800.6 288.5 808.0 287.8C815.4 287.1 824.9 287.6 830.5 289.0C836.1 290.4 837.9 295.3 841.6 296.0C845.3 296.7 849.1 297.2 852.8 293.0C856.5 288.8 859.4 275.6 864.0 271.0C868.6 266.4 874.2 266.0 880.7 265.5C887.2 265.0 895.6 265.8 903.0 268.0C910.4 270.2 917.6 275.7 925.0 279.0C932.4 282.3 940.0 285.5 947.5 287.8C955.0 290.1 962.7 291.6 969.8 293.0C976.9 294.4 986.6 295.5 990.0 296.0" fill="none" stroke="#5a5a5a" stroke-width="1.1" stroke-dasharray="4.5 3"/>
<path d="M559.5 294.0C559.5 296.8 560.1 305.6 559.5 310.6C558.9 315.6 553.5 321.3 556.0 324.0C558.5 326.7 568.2 325.3 574.6 327.0C581.0 328.7 587.9 332.8 594.6 334.0C601.3 335.2 609.7 331.2 614.7 334.0C619.7 336.8 619.7 345.3 624.7 350.6C629.7 355.9 638.1 363.0 644.8 365.8C651.5 368.6 658.8 367.8 664.9 367.5C671.0 367.2 678.8 364.6 681.6 364.0" fill="none" stroke="#5a5a5a" stroke-width="1.1" stroke-dasharray="4.5 3"/>
<path d="M701.7 350.8C703.9 352.8 710.5 360.8 715.0 362.5C719.5 364.2 722.8 362.8 728.4 360.8C734.0 358.9 742.9 355.3 748.5 350.8C754.1 346.3 756.9 339.0 761.9 334.0C766.9 329.0 772.2 325.0 778.6 320.7C785.0 316.4 793.1 311.4 800.0 308.0C806.9 304.6 813.7 300.5 820.0 300.0C826.3 299.5 833.5 303.3 838.0 305.0C842.5 306.7 843.7 308.2 847.0 310.0C850.3 311.8 854.2 318.5 858.0 315.7C861.8 312.9 865.7 298.6 869.5 293.0C873.3 287.4 875.1 283.8 880.7 282.0C886.3 280.2 896.5 280.2 903.0 282.0C909.5 283.8 914.1 289.2 919.7 293.0C925.3 296.8 931.8 300.7 936.4 304.5C941.0 308.3 943.8 312.4 947.5 315.7C951.2 318.9 954.1 321.6 958.7 324.0C963.3 326.4 972.3 329.0 975.0 330.0" fill="none" stroke="#5a5a5a" stroke-width="1.1" stroke-dasharray="4.5 3"/>
<path d="M1050.0 292.0C1051.0 293.0 1053.6 295.3 1056.0 298.0C1058.4 300.7 1061.0 303.2 1064.5 308.0C1068.0 312.8 1073.1 320.2 1077.0 327.0C1080.9 333.8 1085.2 341.6 1088.0 349.0C1090.8 356.4 1094.4 364.4 1094.0 371.4C1093.6 378.4 1088.8 385.2 1085.5 390.8C1082.2 396.4 1077.2 399.7 1074.4 404.7C1071.7 409.7 1069.5 415.0 1069.0 421.0C1068.5 427.0 1071.2 437.4 1071.7 440.7" fill="none" stroke="#5a5a5a" stroke-width="1.1" stroke-dasharray="4.5 3"/>
<path d="M1052.0 303.0C1053.2 304.2 1056.6 307.2 1059.5 310.0C1062.4 312.8 1065.9 316.4 1069.5 320.0C1073.1 323.6 1077.4 328.0 1081.0 331.5C1084.6 335.0 1088.2 335.8 1091.0 341.0C1093.8 346.2 1096.4 355.6 1098.0 363.0C1099.6 370.4 1100.8 378.4 1100.8 385.3C1100.8 392.2 1098.7 399.2 1098.0 404.7C1097.3 410.2 1095.0 414.8 1096.6 418.5C1098.2 422.2 1105.2 424.1 1107.7 426.9C1110.2 429.6 1111.1 433.6 1111.8 435.0" fill="none" stroke="#5a5a5a" stroke-width="1.1" stroke-dasharray="4.5 3"/>
<path d="M1100.8 385.3C1102.4 383.0 1106.1 374.9 1110.5 371.4C1114.9 367.9 1122.4 365.5 1127.0 364.5C1131.6 363.5 1136.2 365.2 1138.0 365.3" fill="none" stroke="#5a5a5a" stroke-width="1.1" stroke-dasharray="4.5 3"/>
<path d="M1116.0 393.6C1115.8 395.9 1112.8 403.4 1114.6 407.5C1116.4 411.6 1122.2 416.4 1127.0 418.5C1131.8 420.6 1138.2 420.9 1143.7 420.0C1149.2 419.1 1156.2 416.0 1160.3 413.0C1164.4 410.0 1164.9 405.7 1168.6 402.0C1172.3 398.3 1177.9 392.9 1182.5 390.8C1187.1 388.7 1192.2 388.1 1196.4 389.5C1200.6 390.9 1202.8 397.4 1207.4 399.0C1212.0 400.6 1219.4 399.0 1224.0 399.0C1228.6 399.0 1233.2 399.0 1235.0 399.0" fill="none" stroke="#5a5a5a" stroke-width="1.1" stroke-dasharray="4.5 3"/>
<path d="M1168.6 402.0C1168.8 403.8 1167.7 410.9 1170.0 413.0C1172.3 415.1 1177.7 414.4 1182.5 414.4C1187.3 414.4 1193.9 412.3 1199.0 413.0C1204.1 413.7 1208.8 416.4 1213.0 418.5C1217.2 420.6 1220.8 424.2 1224.0 425.5C1227.2 426.8 1231.0 426.2 1232.4 426.3" fill="none" stroke="#5a5a5a" stroke-width="1.1" stroke-dasharray="4.5 3"/>
<path d="M1385.0 369.0C1387.3 370.1 1393.9 374.4 1398.7 375.7C1403.5 377.0 1408.5 377.6 1414.0 376.8C1419.5 376.0 1427.2 371.6 1432.0 371.0C1436.8 370.4 1439.2 373.0 1443.0 373.4C1446.8 373.8 1452.6 373.4 1454.5 373.4" fill="none" stroke="#5a5a5a" stroke-width="1.1" stroke-dasharray="4.5 3"/>
<path d="M1390.0 375.0C1392.5 376.0 1399.8 380.3 1405.0 381.0C1410.2 381.7 1416.2 379.8 1421.0 379.0C1425.8 378.2 1431.8 376.5 1434.0 376.0" fill="none" stroke="#5a5a5a" stroke-width="1.1" stroke-dasharray="4.5 3"/>
<path d="M1251.6 438.0 L1252.7 407.0 L1245.0 400.0 L1233.7 395.7 L1231.5 384.6 L1236.0 379.0 L1253.8 369.0 L1260.5 371.0 L1259.4 384.6 L1256.0 400.0 L1262.7 394.6 L1276.0 385.7 L1294.0 399.0 L1300.6 392.4 L1311.7 392.4 L1316.0 382.4 L1331.8 372.3 L1347.4 380.0 L1360.8 373.4 L1369.7 364.5 L1365.0 351.0 L1367.5 340.0 L1368.8 329.0 L1377.0 329.0 L1382.6 340.0 L1388.0 351.0 L1397.7 361.0 L1393.6 367.0 L1383.0 374.6 L1369.7 364.5" fill="none" stroke="#4a4a4a" stroke-width="1.2" stroke-linejoin="round"/>
<path d="M1311.7 392.4 L1334.0 402.4 L1338.5 424.7 L1343.0 430.0 L1355.0 431.4 L1355.0 440.0" fill="none" stroke="#4a4a4a" stroke-width="1.2" stroke-linejoin="round"/>
<path d="M1273.8 422.5 L1276.0 414.7 L1284.0 413.6 L1284.0 421.4 L1273.8 423.6" fill="none" stroke="#4a4a4a" stroke-width="1.2" stroke-linejoin="round"/>
<path d="M1345.0 454.8 L1387.6 462.0" fill="none" stroke="#4a4a4a" stroke-width="1.2" stroke-linejoin="round"/>
<path d="M1251.6 438.0 L1251.6 452.0" fill="none" stroke="#4a4a4a" stroke-width="1.2" stroke-linejoin="round"/>
<path d="M598.8 726.0 L602.0 700.0 L607.7 699.0" fill="none" stroke="#4a4a4a" stroke-width="1.2" stroke-linejoin="round"/>
<path d="M630.0 696.0 L630.0 691.5 L647.8 680.0 L670.0 680.0 L671.0 691.5 L683.5 705.0 L698.0 713.6 L705.8 714.8" fill="none" stroke="#4a4a4a" stroke-width="1.2" stroke-linejoin="round"/>
<path d="M736.0 724.0 L741.5 720.0 L747.0 722.6 L753.8 722.6" fill="none" stroke="#4a4a4a" stroke-width="1.2" stroke-linejoin="round"/>
<rect x="706.5" y="461.7" width="15" height="10" fill="#bdbdbd"/>
<rect x="1042.5" y="442" width="15" height="10" fill="#bdbdbd"/>
<rect x="1032.5" y="535.6" width="15" height="10" fill="#bdbdbd"/>
<rect x="1092.5" y="540.6" width="15" height="10" fill="#bdbdbd"/>
<rect x="700.5" y="564" width="15" height="10" fill="#bdbdbd"/>
<rect x="1019.5" y="366" width="15" height="10" fill="#bdbdbd"/>
<rect x="401.5" y="491" width="15" height="10" fill="#bdbdbd"/>
<rect x="724.5" y="362" width="15" height="10" fill="#bdbdbd"/>
<rect x="923.5" y="301" width="15" height="10" fill="#bdbdbd"/>
<rect x="1113.5" y="441" width="15" height="10" fill="#bdbdbd"/>
<rect x="508.5" y="702" width="15" height="10" fill="#bdbdbd"/>
<rect x="922.5" y="652" width="15" height="10" fill="#bdbdbd"/>
<rect x="692.5" y="692" width="15" height="10" fill="#bdbdbd"/>
<g font-family="Liberation Sans, sans-serif" font-size="11.3" fill="#6a6a6a" text-anchor="middle" stroke="#ffffff" stroke-width="2.4" stroke-linejoin="round" paint-order="stroke" style="paint-order:stroke">
<text x="772" y="141.0">Koruçam</text>
<text x="772" y="152.3">Κορμακίτης</text>
<text x="848" y="133.0">Karsıyaka</text>
<text x="752" y="180.0">Akdeniz</text>
<text x="752" y="191.3">Αγια Ειρηνη</text>
<text x="752" y="202.6">Κερυνειας</text>
<text x="752" y="252.0">Güzelyurt</text>
<text x="752" y="263.3">Μόρφου</text>
<text x="792" y="279.0">Akçay</text>
<text x="792" y="290.3">Αργάκι</text>
<text x="822" y="316.0">Peristerona</text>
<text x="822" y="327.3">Περιστερωνα</text>
<text x="822" y="338.6">Λευκωσιας</text>
<text x="664" y="334.0">Lefke</text>
<text x="664" y="345.3">Λεύκα</text>
<text x="551" y="278.0">Kato Pyrgos</text>
<text x="551" y="289.3">Κάτω Πύργος</text>
<text x="455" y="295.0">Pomos</text>
<text x="455" y="306.3">Πωμός</text>
<text x="371" y="390.0">Polis</text>
<text x="371" y="401.3">Chrysochous</text>
<text x="371" y="412.6">Πόλη</text>
<text x="371" y="423.9">Χρυσοχούς</text>
<text x="285" y="380.0" font-style="italic" fill="#6f8f84" font-size="13">Akama</text>
<text x="285" y="392.7" font-style="italic" fill="#6f8f84" font-size="13">National</text>
<text x="285" y="406.1" font-style="italic" fill="#6f8f84" font-size="13">Forest Park</text>
<text x="285" y="418.4" fill="#8aa39b" font-size="10.5">Εθνικό Δασικό</text>
<text x="285" y="429.5" fill="#8aa39b" font-size="10.5">Πάρκο Ακάμα</text>
<text x="542" y="418.0" font-style="italic" fill="#7d9289" font-size="12">Paphos Forest</text>
<text x="542" y="429.5" fill="#9aa9a3" font-size="10">Δάσος Πάφου</text>
<text x="700" y="395.0">Evrychou</text>
<text x="700" y="406.3">Ευρύχου</text>
<text x="701" y="440.0">Kakopetria</text>
<text x="701" y="451.3">Κακοπετριά</text>
<text x="371" y="504.0">Kathikas</text>
<text x="371" y="515.3">Κάθικας</text>
<text x="513" y="499.0">Pano Panagia</text>
<text x="513" y="510.3">Πάνω Παναγιά</text>
<text x="674" y="525.0">Pano Platres</text>
<text x="674" y="536.3">Πάνω Πλάτρες</text>
<text x="779" y="500.0">Agros</text>
<text x="779" y="511.3">Αγρός</text>
<text x="635" y="558.0">Omodos</text>
<text x="635" y="569.3">Όμοδος</text>
<text x="434" y="656.0">Timi</text>
<text x="434" y="667.3">Τιμή</text>
<text x="477" y="669.0">Kouklia</text>
<text x="477" y="680.3">Κούκλια</text>
<text x="477" y="691.6">Πάφου</text>
<text x="560" y="702.0">Pissouri</text>
<text x="560" y="713.3">Πισσούρι</text>
<text x="584" y="651.0">Anogyra</text>
<text x="584" y="662.3">Ανώγυρα</text>
<text x="971" y="623.0">Kalavasos</text>
<text x="971" y="634.3">Καλαβασός</text>
<text x="998" y="659.0">Zygi</text>
<text x="998" y="670.3">Ζύγι</text>
<text x="977" y="537.0">Pano Lefkara</text>
<text x="977" y="548.3">Πάνω</text>
<text x="977" y="559.6">Λεύκαρα</text>
<text x="1036" y="578.0">Kofinou</text>
<text x="1036" y="589.3">Κοφίνου</text>
<text x="1103" y="596.0">Mazotos</text>
<text x="1103" y="607.3">Μαζωτός</text>
<text x="970" y="473.0">Lythrodontas</text>
<text x="970" y="484.3">Λυθροδόντας</text>
<text x="1056" y="414.0">Dali</text>
<text x="1056" y="425.3">Δάλι</text>
<text x="1140" y="379.0">Athienou</text>
<text x="1140" y="390.3">Αθηένου</text>
<text x="1245" y="417.0">Pyla</text>
<text x="1219" y="446.0">Oroklini</text>
<text x="1219" y="457.3">Ορόκλινη</text>
<text x="1165" y="472.0">Aradippou</text>
<text x="1165" y="483.3">Αραδίππου</text>
<text x="1172" y="536.0">Dromolaxia</text>
<text x="1172" y="547.3">Δρομολαξιά</text>
<text x="1304" y="437.0">Ormideia</text>
<text x="1304" y="448.3">Ορμήδεια</text>
<text x="1382" y="423.0">Liopetri</text>
<text x="1382" y="434.3">Λιοπέτρι</text>
<text x="1443" y="400.0">Paralimni</text>
<text x="1443" y="411.3">Παραλίμνι</text>
<text x="1455" y="441.0">Ayia Napa</text>
<text x="1455" y="452.3">Αγία Νάπα</text>
<text x="1414" y="330.0">Gazimağusa</text>
<text x="1414" y="341.3">Αμμόχωστος</text>
<text x="1371" y="266.0">Yeni Boğaziçi</text>
<text x="1371" y="277.3">Αγ. Σέργιος</text>
<text x="1383" y="192.0">Yeni İskele</text>
<text x="1383" y="203.3">Τρίκωμο</text>
<text x="1456" y="142.0">Kalecik</text>
<text x="1456" y="153.3">Γαστριά</text>
<text x="1272" y="212.0">Geçitkale</text>
<text x="1272" y="223.3">Λευκόνοικο</text>
<text x="1181" y="215.0">Serdarlı</text>
<text x="1181" y="226.3">Κιάδος</text>
<text x="1099" y="226.0">Değirmenlik</text>
<text x="1099" y="237.3">Κυθρέα</text>
<text x="1173" y="259.0">Aslanköy</text>
<text x="1173" y="270.3">Αγγαστίνα</text>
<text x="1187" y="297.0">Paşaköy</text>
<text x="1187" y="308.3">Άσκεια</text>
<text x="1166" y="144.0">Αγιος</text>
<text x="1166" y="155.3">Αμβροσιος</text>
<text x="1166" y="166.6">Κερυνειας</text>
<text x="1292" y="121.5">Ακανθού</text>
<text x="1007.5" y="276.0" font-size="14.5" fill="#2f2f2f" stroke-width="3" text-anchor="start">Nicosia</text>
<text x="1064" y="288.0" font-size="16.5" fill="#2f2f2f" stroke-width="3" text-anchor="end">Λευκωσία</text>
<text x="921" y="402.0" font-size="19" fill="#3a3a3a" font-weight="bold" stroke-width="3">Cyprus</text>
</g>
</svg>
<div id="mks" style="position:absolute;left:0;top:-121px;width:1794px;height:902px">
<div style="position:absolute;left:667px;top:462px;width:19px;height:19px;border-radius:50% 50% 50% 0;background:#fcfcfc;transform:rotate(-45deg);box-shadow:-1px 1px 2px rgba(0,0,0,.13)"></div>
<svg style="position:absolute;left:670px;top:466px" width="13" height="9" viewBox="0 0 13 9"><path d="M0 9 4.500 1l2.500 4 1.500-2L13 9z" fill="#ececee"/></svg>
<div class="mk " style="left:403.0px;top:352.5px;width:36px">340k</div>
<div class="mk " style="left:313.0px;top:397.5px;width:36px">583k</div>
<div class="mk " style="left:345.0px;top:402.5px;width:36px">250k</div>
<div class="mk " style="left:286.8px;top:511.3px;width:38px">1.05M</div>
<div class="mk " style="left:285.9px;top:502.6px;width:36px">930k</div>
<div class="mk " style="left:316.0px;top:530.1px;width:36px">583k</div>
<div class="mk " style="left:331.0px;top:523.5px;width:36px">210k</div>
<div class="mk " style="left:327.4px;top:521.7px;width:36px">165k</div>
<div class="mk " style="left:315.0px;top:545.2px;width:36px">693k</div>
<div class="mk " style="left:374.5px;top:545.2px;width:36px">350k</div>
<div class="mk " style="left:333.4px;top:555.4px;width:36px">350k</div>
<div class="mk " style="left:376.4px;top:579.9px;width:36px">335k</div>
<div class="mk " style="left:369.8px;top:574.2px;width:36px">418k</div>
<div class="mk " style="left:350.0px;top:583.3px;width:36px">250k</div>
<div class="mk " style="left:337.8px;top:572.9px;width:36px">297k</div>
<div class="mk " style="left:388.0px;top:565.9px;width:36px">301k</div>
<div class="mk " style="left:358.0px;top:564.1px;width:36px">390k</div>
<div class="mk dk" style="left:373.5px;top:595.2px;width:38px">2 ads</div>
<div class="mk " style="left:359.4px;top:594.0px;width:36px">320k</div>
<div class="mk " style="left:338.3px;top:592.7px;width:36px">580k</div>
<div class="mk " style="left:367.0px;top:613.5px;width:36px">260k</div>
<div class="mk " style="left:341.5px;top:608.2px;width:36px">385k</div>
<div class="mk " style="left:345.3px;top:616.3px;width:36px">299k</div>
<div class="mk " style="left:387.7px;top:623.2px;width:36px">1.2M</div>
<div class="mk " style="left:378.3px;top:626.3px;width:36px">480k</div>
<div class="mk " style="left:352.8px;top:632.3px;width:36px">275k</div>
<div class="mk rd" style="left:357.5px;top:625.7px;width:38px">1.49M</div>
<div class="mk dk" style="left:425.0px;top:667.5px;width:38px">2 ads</div>
<div class="mk " style="left:531.0px;top:668.5px;width:36px">420k</div>
<div class="mk " style="left:566.0px;top:644.5px;width:36px">365k</div>
<div class="mk " style="left:480.0px;top:689.5px;width:36px">600k</div>
<div class="mk " style="left:537.0px;top:706.5px;width:36px">380k</div>
<div class="mk " style="left:607.0px;top:695.5px;width:36px">690k</div>
<div class="mk " style="left:635.0px;top:465.0px;width:36px">280k</div>
<div class="mk " style="left:689.3px;top:551.5px;width:36px">367k</div>
<div class="mk " style="left:667.6px;top:544.5px;width:36px">640k</div>
<div class="mk " style="left:858.5px;top:553.0px;width:36px">330k</div>
<div class="mk " style="left:673.6px;top:645.1px;width:36px">295k</div>
<div class="mk rd" style="left:678.2px;top:648.5px;width:36px">750k</div>
<div class="mk " style="left:752.0px;top:621.8px;width:36px">170k</div>
<div class="mk " style="left:753.7px;top:638.1px;width:36px">290k</div>
<div class="mk " style="left:805.8px;top:632.3px;width:36px">400k</div>
<div class="mk " style="left:805.8px;top:621.0px;width:36px">650k</div>
<div class="mk dk" style="left:886.0px;top:643.1px;width:38px">2 ads</div>
<div class="mk " style="left:875.0px;top:640.0px;width:36px">310k</div>
<div class="mk " style="left:878.9px;top:639.2px;width:36px">328k</div>
<div class="mk " style="left:871.0px;top:665.0px;width:36px">410k</div>
<div class="mk " style="left:868.0px;top:662.5px;width:36px">220k</div>
<div class="mk " style="left:846.5px;top:655.9px;width:36px">650k</div>
<div class="mk " style="left:760.9px;top:655.5px;width:36px">340k</div>
<div class="mk " style="left:761.7px;top:660.0px;width:36px">720k</div>
<div class="mk rd" style="left:797.0px;top:656.5px;width:36px">995k</div>
<div class="mk " style="left:824.9px;top:660.5px;width:36px">350k</div>
<div class="mk " style="left:840.7px;top:668.8px;width:36px">280k</div>
<div class="mk " style="left:826.5px;top:672.2px;width:36px">195k</div>
<div class="mk " style="left:731.8px;top:690.5px;width:36px">340k</div>
<div class="mk " style="left:722.0px;top:682.1px;width:36px">260k</div>
<div class="mk " style="left:727.0px;top:673.0px;width:36px">530k</div>
<div class="mk " style="left:691.9px;top:692.1px;width:36px">240k</div>
<div class="mk " style="left:707.7px;top:692.9px;width:36px">315k</div>
<div class="mk " style="left:694.0px;top:698.5px;width:36px">185k</div>
<div class="mk " style="left:703.8px;top:698.3px;width:36px">230k</div>
<div class="mk " style="left:755.0px;top:694.5px;width:36px">255k</div>
<div class="mk " style="left:772.0px;top:699.5px;width:36px">360k</div>
<div class="mk " style="left:752.6px;top:716.2px;width:36px">150k</div>
<div class="mk " style="left:751.7px;top:712.5px;width:36px">225k</div>
<div class="mk rd" style="left:724.6px;top:725.0px;width:36px">190k</div>
<div class="mk " style="left:970.0px;top:633.5px;width:36px">250k</div>
<div class="mk dk" style="left:1001.0px;top:644.5px;width:38px">2 ads</div>
<div class="mk " style="left:994.0px;top:625.5px;width:36px">554k</div>
<div class="mk " style="left:996.0px;top:637.5px;width:36px">690k</div>
<div class="mk " style="left:877.2px;top:293.0px;width:36px">380k</div>
<div class="mk " style="left:898.2px;top:325.1px;width:36px">250k</div>
<div class="mk " style="left:929.8px;top:372.3px;width:36px">350k</div>
<div class="mk " style="left:924.2px;top:403.3px;width:36px">229k</div>
<div class="mk " style="left:954.0px;top:459.5px;width:36px">202k</div>
<div class="mk " style="left:1019.9px;top:262.8px;width:36px">187k</div>
<div class="mk " style="left:1008.0px;top:268.5px;width:36px">184k</div>
<div class="mk " style="left:1014.0px;top:279.7px;width:36px">590k</div>
<div class="mk " style="left:969.0px;top:289.7px;width:36px">298k</div>
<div class="mk " style="left:977.5px;top:281.5px;width:36px">159k</div>
<div class="mk " style="left:1024.9px;top:294.7px;width:36px">265k</div>
<div class="mk " style="left:1021.5px;top:290.5px;width:36px">195k</div>
<div class="mk " style="left:998.0px;top:308.8px;width:36px">310k</div>
<div class="mk " style="left:983.0px;top:308.8px;width:36px">240k</div>
<div class="mk " style="left:965.9px;top:310.5px;width:36px">178k</div>
<div class="mk " style="left:991.6px;top:303.8px;width:36px">165k</div>
<div class="mk " style="left:1001.6px;top:298.9px;width:36px">275k</div>
<div class="mk " style="left:1000.8px;top:294.7px;width:36px">330k</div>
<div class="mk " style="left:1000.8px;top:289.4px;width:36px">420k</div>
<div class="mk " style="left:970.0px;top:321.3px;width:36px">145k</div>
<div class="mk " style="left:952.0px;top:325.1px;width:36px">250k</div>
<div class="mk " style="left:990.0px;top:329.5px;width:36px">320k</div>
<div class="mk " style="left:1010.0px;top:332.5px;width:36px">430k</div>
<div class="mk " style="left:1042.3px;top:332.5px;width:36px">483k</div>
<div class="mk " style="left:1028.5px;top:325.1px;width:36px">700k</div>
<div class="mk " style="left:974.0px;top:341.3px;width:36px">425k</div>
<div class="mk " style="left:977.0px;top:331.8px;width:36px">785k</div>
<div class="mk " style="left:1003.3px;top:349.5px;width:36px">520k</div>
<div class="mk " style="left:1067.0px;top:425.5px;width:36px">199k</div>
<div class="mk " style="left:1065.6px;top:469.5px;width:36px">350k</div>
<div class="mk " style="left:1059.0px;top:548.2px;width:36px">233k</div>
<div class="mk " style="left:1083.0px;top:594.5px;width:36px">120k</div>
<div class="mk " style="left:1090.5px;top:594.5px;width:32px">65k</div>
<div class="mk " style="left:1230.0px;top:416.5px;width:32px">95k</div>
<div class="mk " style="left:1224.4px;top:443.9px;width:36px">210k</div>
<div class="mk dk" style="left:1212.0px;top:448.0px;width:38px">2 ads</div>
<div class="mk " style="left:1204.0px;top:443.5px;width:36px">173k</div>
<div class="mk " style="left:1204.0px;top:460.2px;width:36px">250k</div>
<div class="mk " style="left:1153.7px;top:464.8px;width:32px">95k</div>
<div class="mk " style="left:1157.0px;top:473.5px;width:36px">500k</div>
<div class="mk " style="left:1190.7px;top:486.5px;width:36px">330k</div>
<div class="mk " style="left:1189.0px;top:504.2px;width:36px">190k</div>
<div class="mk " style="left:1160.5px;top:496.2px;width:36px">310k</div>
<div class="mk " style="left:1177.4px;top:499.8px;width:36px">255k</div>
<div class="mk " style="left:1182.7px;top:490.5px;width:36px">240k</div>
<div class="mk " style="left:1189.0px;top:517.2px;width:36px">285k</div>
<div class="mk " style="left:1147.0px;top:523.5px;width:36px">144k</div>
<div class="mk " style="left:1123.0px;top:545.0px;width:36px">160k</div>
<div class="mk " style="left:1150.0px;top:545.0px;width:36px">195k</div>
<div class="mk " style="left:1142.8px;top:553.0px;width:36px">180k</div>
<div class="mk " style="left:1160.5px;top:578.5px;width:36px">310k</div>
<div class="mk " style="left:1142.8px;top:568.1px;width:36px">320k</div>
<div class="mk " style="left:1158.8px;top:573.5px;width:36px">420k</div>
<div class="mk " style="left:1165.9px;top:566.3px;width:36px">490k</div>
<div class="mk " style="left:1428.6px;top:377.2px;width:36px">235k</div>
<div class="mk " style="left:1437.0px;top:396.5px;width:36px">180k</div>
<div class="mk " style="left:1434.0px;top:396.5px;width:32px">95k</div>
<div class="mk " style="left:1396.8px;top:405.1px;width:36px">175k</div>
<div class="mk " style="left:1472.0px;top:410.5px;width:36px">650k</div>
<div class="mk " style="left:1474.0px;top:412.5px;width:36px">410k</div>
<div class="mk " style="left:1477.0px;top:414.0px;width:36px">900k</div>
<div class="mk " style="left:1438.0px;top:434.0px;width:36px">330k</div>
<div class="mk " style="left:1426.4px;top:432.9px;width:36px">430k</div>
<div class="mk " style="left:1484.4px;top:441.9px;width:36px">720k</div>
<div class="mk " style="left:1382.8px;top:443.5px;width:36px">350k</div>
<div class="mk " style="left:1384.7px;top:440.3px;width:36px">620k</div>
<div class="mk dk" style="left:1330.0px;top:436.5px;width:38px">2 ads</div>
<div class="mk " style="left:1337.0px;top:437.5px;width:36px">270k</div>
<div class="ph" style="left:787.5px;top:687.1px"><svg width="31" height="31" viewBox="1 1 30 30" preserveAspectRatio="none"><rect width="32" height="32" fill="#cdbba3"/><rect y="0" width="32" height="5" fill="#dfe3e6"/><g fill="#8d7861"><rect y="8" width="32" height="2"/><rect y="13" width="32" height="2"/><rect y="18" width="32" height="2"/></g><rect x="3" y="20" width="26" height="4" fill="#e6dccb"/><rect y="24" width="32" height="8" fill="#5b554d"/></svg></div>
<div class="ph" style="left:815.0px;top:671.7px"><svg width="31" height="31" viewBox="1 1 30 30" preserveAspectRatio="none"><rect width="32" height="32" fill="#c9dcf0"/><rect y="0" width="32" height="8" fill="#b5cfea"/><path d="M2 19 14 15 30 14 32 15 32 27 2 27z" fill="#97836a"/><path d="M4 20 14 17 30 16 30 19 4 23z" fill="#6f604c"/><rect x="3" y="19" width="5" height="8" fill="#6e7d55"/><rect y="26" width="32" height="6" fill="#bdb6a8"/></svg></div>
<div class="ph" style="left:792.1px;top:656.8px"><svg width="31" height="31" viewBox="1 1 30 30" preserveAspectRatio="none"><rect width="32" height="32" fill="#e4e8ea"/><rect x="15" y="4" width="15" height="14" fill="#39423f"/><rect x="17" y="7" width="12" height="3" fill="#6c7874"/><rect x="4" y="11" width="9" height="8" fill="#2f3836"/><rect y="17" width="32" height="5" fill="#2e3d33"/><rect y="21" width="32" height="3" fill="#9aa39c"/><rect y="23.5" width="32" height="9" fill="#5c8c47"/></svg></div>
<div class="ph" style="left:768.4px;top:670.1px"><svg width="31" height="31" viewBox="1 1 30 30" preserveAspectRatio="none"><rect width="32" height="32" fill="#25223c"/><rect y="0" width="32" height="9" fill="#3d3868"/><rect x="4" y="7" width="20" height="14" fill="#85703e"/><rect x="4" y="7" width="20" height="14" fill="url(#win1)"/><rect x="22" y="10" width="8" height="11" fill="#3a3550"/><rect y="21" width="32" height="11" fill="#17161f"/><rect x="3" y="20" width="24" height="2" fill="#3a3424"/></svg></div>
<div class="ph" style="left:1183.4px;top:459.7px"><svg width="31" height="31" viewBox="1 1 30 30" preserveAspectRatio="none"><rect width="32" height="32" fill="#d3dbde"/><rect x="1" y="5" width="13" height="13" fill="#3f4446"/><rect x="13" y="6" width="17" height="12" fill="#54595b"/><rect y="16" width="32" height="4" fill="#6a7470"/><rect y="19" width="32" height="7" fill="#3f6b42"/><path d="M12 19h12l-3 5H10z" fill="#3d8fc4"/><path d="M0 26 32 20v12H0z" fill="#c5c9cc"/><path d="M0 25.500 32 19.500v1.500L0 27z" fill="#2f3a34"/></svg></div>
</div>
<div id="sam"><svg class="ico" style="left:11px;top:8px" width="18" height="18" viewBox="0 0 18 18" fill="none" stroke="#dc3a5a" stroke-width="1.600" stroke-linecap="round" stroke-linejoin="round"><rect x="1.500" y="1.500" width="15" height="15" rx="2"/><path d="M5.500 9.200 8 11.700l4.700-5"/></svg>Search as I move the map</div>
<div class="bbtn" style="left:766px;width:111.500px;padding-left:37px"><svg class="ico" style="left:13px;top:9px" width="15" height="14" viewBox="0 0 15 14" fill="none" stroke="#c9405c" stroke-width="1.500" stroke-linecap="round"><path d="M5 2.500h8.500M5 7h8.500M5 11.500h8.500"/><path d="M1.500 2.500h.6M1.500 7h.6M1.500 11.500h.6" stroke-width="2"/></svg>List View</div>
<div class="bbtn" style="left:896px;width:127.500px;padding-left:36px"><svg class="ico" style="left:12px;top:8px" width="14" height="16" viewBox="0 0 14 16" fill="none" stroke="#c9405c" stroke-width="1.300" stroke-linecap="round" stroke-linejoin="round"><path d="M7 1.800c-2.300 0-3.800 1.700-3.800 3.900v2.600L2 10.700v.7h10v-.7l-1.200-2.400V5.700c0-2.200-1.500-3.900-3.800-3.900z"/><path d="M5.800 13.200a1.300 1.300 0 0 0 2.400 0"/></svg>Get notified</div>
<div class="tool" style="top:659px"><svg style="position:absolute;left:11px;top:6px" width="26" height="24" viewBox="0 0 26 24" fill="none" stroke="#444" stroke-width="1.100" stroke-linecap="round" stroke-linejoin="round"><path d="M9.500 7.500C5 6.500 1.500 7.600 1.500 9.500c0 2.200 5 2.800 8 3.200"/><ellipse cx="15" cy="17" rx="7" ry="3.200"/><path d="M10.500 17.500 12 12.500 21 3l2.500 2.500L14 15z" fill="#9a9a9a"/></svg><span>Draw</span></div>
<div class="tool" style="top:714.500px"><svg style="position:absolute;left:13px;top:4px" width="22" height="26" viewBox="0 0 22 26" fill="none" stroke="#222" stroke-width="1.300" stroke-linecap="round" stroke-linejoin="round"><path d="M10 20S3.500 13.500 3.500 8.500a6.500 6.500 0 0 1 13 0C16.500 13.500 10 20 10 20z"/><circle cx="10" cy="8.500" r="2.400"/><path d="M5 19.500c-1.500.5-2.500 1.200-2.500 2 0 1.500 3.400 2.500 7.500 2.500s7.500-1 7.500-2.500c0-.8-1-1.500-2.500-2"/></svg><span>Places</span></div>
<div id="brain"><svg style="position:absolute;left:7px;top:8px" width="26" height="24" viewBox="0 0 26 24"><defs><linearGradient id="bg" x1="0" y1="0" x2="1" y2="1"><stop offset="0" stop-color="#ec4fa3"/><stop offset=".5" stop-color="#a855f7"/><stop offset="1" stop-color="#6366f1"/></linearGradient></defs><path d="M12 3C9 1 4.500 2.500 4 6 1.500 7 1 10.500 2.500 12.500 1.500 15 3 18 6 18.500 7.500 21 11 21 12 19z" fill="url(#bg)"/><path d="M14 3c3-2 7.500-.5 8 3 2.500 1 3 4.500 1.500 6.500 1 2.500-.5 5.500-3.500 6-1.500 2.500-5 2.500-6 .5z" fill="#6f78f2"/><path d="M5 8c2 .5 3 2 2.500 4M9 5c-.5 2 .5 3 2.500 3M6 15c1.500-1 3-.5 4 1" stroke="#f7a8d8" stroke-width=".9" fill="none"/></svg></div>
<svg id="goog" width="80" height="30" viewBox="0 0 80 30"><text x="8.500" y="23.200" font-family="Liberation Sans, sans-serif" font-size="17.500" font-weight="bold" letter-spacing="-0.900" fill="#fff" stroke="#8b9ca5" stroke-width="2" stroke-linejoin="round" style="paint-order:stroke">Google</text></svg>
<div id="attr"><b>Keyboard shortcuts</b><i style="left:94px;width:115px">Map data ©2025 Google</i><i style="left:209px;width:40px">Terms</i></div>
</div>
<div id="foot"></div>
</body>
</html>
